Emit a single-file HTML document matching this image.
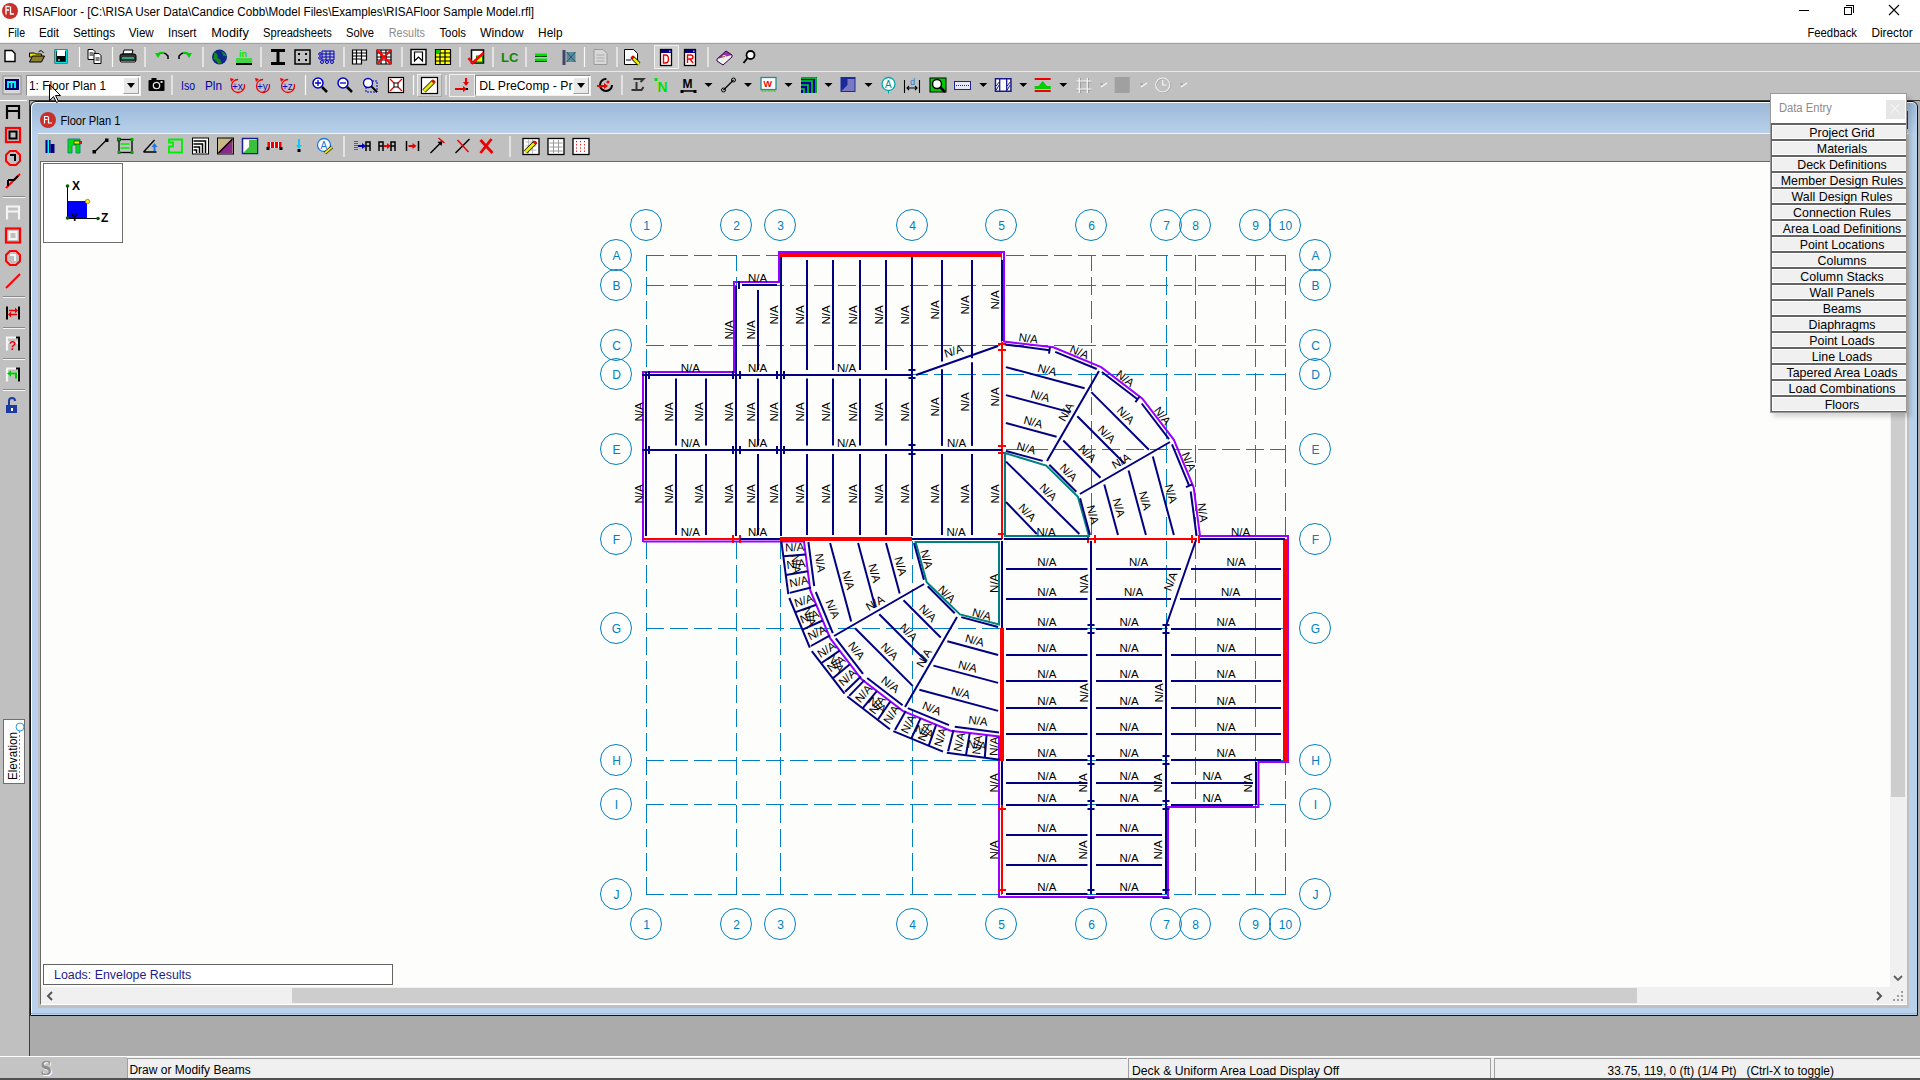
<!DOCTYPE html>
<html><head><meta charset="utf-8"><style>
*{margin:0;padding:0;box-sizing:border-box}
html,body{width:1920px;height:1080px;overflow:hidden;background:#c0c0c0;font-family:"Liberation Sans", sans-serif;}
.a{position:absolute}
svg text.na{font-family:"Liberation Sans", sans-serif;font-size:11.5px;fill:#000;text-anchor:middle;dominant-baseline:central}
svg text.bub{font-family:"Liberation Sans", sans-serif;font-size:12px;fill:#0080c0;text-anchor:middle}
</style></head>
<body>
<div class="a" style="left:0;top:0;width:1920px;height:42px;background:#fff"></div>
<div class="a" style="left:2px;top:3px;width:16px;height:16px;border-radius:50%;background:#c8302c"></div>
<div class="a" style="left:1799px;top:10px;width:10px;height:1px;background:#000"></div>
<div class="a" style="left:1846px;top:5px;width:8px;height:8px;border-top:1px solid #000;border-right:1px solid #000"></div>
<div class="a" style="left:1844px;top:7px;width:8px;height:8px;border:1px solid #000;background:#fff"></div>
<div class="a" style="left:0;top:42px;width:1920px;height:1px;background:#f0f0f0"></div>
<div class="a" style="left:0;top:43px;width:1920px;height:1px;background:#a0a0a0"></div>
<div class="a" style="left:0;top:44px;width:1920px;height:28px;background:#c0c0c0;border-bottom:1px solid #e8e8e8"></div>
<div class="a" style="left:0;top:72px;width:1920px;height:29px;background:#c0c0c0"></div>
<div class="a" style="left:0;top:100px;width:27px;height:1px;background:#fff"></div>
<div class="a" style="left:26px;top:75px;width:115px;height:21px;background:#fff;border:1px solid #8a8a8a;border-right-color:#f0f0f0;border-bottom-color:#f0f0f0"></div>
<div class="a" style="left:123px;top:77px;width:16px;height:17px;background:#e8e8e8;border:1px solid #fff;border-right-color:#a0a0a0;border-bottom-color:#a0a0a0"></div>
<div class="a" style="left:475px;top:75px;width:116px;height:21px;background:#fff;border:1px solid #8a8a8a;border-right-color:#f0f0f0;border-bottom-color:#f0f0f0"></div>
<div class="a" style="left:573px;top:77px;width:16px;height:17px;background:#e8e8e8;border:1px solid #fff;border-right-color:#a0a0a0;border-bottom-color:#a0a0a0"></div>
<div class="a" style="left:417px;top:74px;width:25px;height:23px;background:#d0d0d0;border:1px solid #f0f0f0;border-right-color:#a8a8a8;border-bottom-color:#a8a8a8"></div>
<div class="a" style="left:449px;top:74px;width:26px;height:23px;background:#c8c8c8;border:1px solid #f0f0f0"></div>
<div class="a" style="left:654px;top:45px;width:25px;height:24px;background:#d0d0d0;border:1px solid #f0f0f0"></div>
<div class="a" style="left:29px;top:100px;width:1891px;height:957px;background:#ababab;border-left:1px solid #3c3c3c;border-top:1px solid #3c3c3c"></div>
<div class="a" style="left:30px;top:101px;width:1888px;height:915px;background:#b9d1ea;border:1px solid #111;border-radius:6px 6px 0 0;box-shadow:inset 1px 1px 0 #fff"></div>
<div class="a" style="left:32px;top:103px;width:1884px;height:30px;background:linear-gradient(#9cb9d8,#b8d0ea);border-radius:5px 5px 0 0"></div>
<div class="a" style="left:1906px;top:111px;width:2px;height:18px;background:#8a1a1a"></div>
<div class="a" style="left:31px;top:1013px;width:1886px;height:1px;background:#5ad8f0"></div>
<div class="a" style="left:40px;top:112px;width:16px;height:16px;border-radius:50%;background:#c8302c"></div>
<div class="a" style="left:38px;top:133px;width:1871px;height:875px;background:#c0c0c0;border-top:1px solid #f4f4f4"></div>
<div class="a" style="left:40px;top:161px;width:1867px;height:844px;background:#f0f0f0;border-left:1px solid #696969;border-top:1px solid #696969;border-bottom:1px solid #fff"></div>
<div class="a" style="left:41px;top:162px;width:1849px;height:825px;background:#fdfdfb"></div>
<div class="a" style="left:43px;top:163px;width:80px;height:80px;background:#fff;border:1px solid #6e6e6e"></div>
<div class="a" style="left:1890px;top:162px;width:17px;height:825px;background:#f0f0f0"></div>
<div class="a" style="left:1891px;top:162px;width:14px;height:635px;background:#cdcdcd"></div>
<div class="a" style="left:41px;top:987px;width:1849px;height:17px;background:#f0f0f0"></div>
<div class="a" style="left:292px;top:988px;width:1345px;height:15px;background:#cdcdcd"></div>
<div class="a" style="left:43px;top:964px;width:350px;height:21px;background:#fff;border:1px solid #646464"></div>
<div class="a" style="left:3px;top:719px;width:22px;height:65px;background:#fff;border:1px solid #6e6e6e"></div>
<div class="a" style="left:1773px;top:97px;width:138px;height:320px;background:rgba(0,0,0,.15);filter:blur(2px)"></div>
<div class="a" style="left:1770px;top:93px;width:137px;height:320px;background:#646464;border:1px solid #9a9a9a"></div>
<div class="a" style="left:1771px;top:94px;width:135px;height:29px;background:#fff"></div>
<div class="a" style="left:1886px;top:100px;width:19px;height:19px;background:#e6e6e6"></div>
<div class="a" style="left:1889px;top:108px;width:12px;height:1px;background:#f8f8f8;transform:rotate(45deg)"></div>
<div class="a" style="left:1889px;top:108px;width:12px;height:1px;background:#f8f8f8;transform:rotate(-45deg)"></div>
<div class="a" style="left:1772px;top:125px;width:134px;height:14px;background:#f0f0f0;border-top:1px solid #fff;border-bottom:1px solid #fff;border-left:1px solid #fff"></div>
<div class="a" style="left:1772px;top:141px;width:134px;height:14px;background:#f0f0f0;border-top:1px solid #fff;border-bottom:1px solid #fff;border-left:1px solid #fff"></div>
<div class="a" style="left:1772px;top:157px;width:134px;height:14px;background:#f0f0f0;border-top:1px solid #fff;border-bottom:1px solid #fff;border-left:1px solid #fff"></div>
<div class="a" style="left:1772px;top:173px;width:134px;height:14px;background:#f0f0f0;border-top:1px solid #fff;border-bottom:1px solid #fff;border-left:1px solid #fff"></div>
<div class="a" style="left:1772px;top:189px;width:134px;height:14px;background:#f0f0f0;border-top:1px solid #fff;border-bottom:1px solid #fff;border-left:1px solid #fff"></div>
<div class="a" style="left:1772px;top:205px;width:134px;height:14px;background:#f0f0f0;border-top:1px solid #fff;border-bottom:1px solid #fff;border-left:1px solid #fff"></div>
<div class="a" style="left:1772px;top:221px;width:134px;height:14px;background:#f0f0f0;border-top:1px solid #fff;border-bottom:1px solid #fff;border-left:1px solid #fff"></div>
<div class="a" style="left:1772px;top:237px;width:134px;height:14px;background:#f0f0f0;border-top:1px solid #fff;border-bottom:1px solid #fff;border-left:1px solid #fff"></div>
<div class="a" style="left:1772px;top:253px;width:134px;height:14px;background:#f0f0f0;border-top:1px solid #fff;border-bottom:1px solid #fff;border-left:1px solid #fff"></div>
<div class="a" style="left:1772px;top:269px;width:134px;height:14px;background:#f0f0f0;border-top:1px solid #fff;border-bottom:1px solid #fff;border-left:1px solid #fff"></div>
<div class="a" style="left:1772px;top:285px;width:134px;height:14px;background:#f0f0f0;border-top:1px solid #fff;border-bottom:1px solid #fff;border-left:1px solid #fff"></div>
<div class="a" style="left:1772px;top:301px;width:134px;height:14px;background:#f0f0f0;border-top:1px solid #fff;border-bottom:1px solid #fff;border-left:1px solid #fff"></div>
<div class="a" style="left:1772px;top:317px;width:134px;height:14px;background:#f0f0f0;border-top:1px solid #fff;border-bottom:1px solid #fff;border-left:1px solid #fff"></div>
<div class="a" style="left:1772px;top:333px;width:134px;height:14px;background:#f0f0f0;border-top:1px solid #fff;border-bottom:1px solid #fff;border-left:1px solid #fff"></div>
<div class="a" style="left:1772px;top:349px;width:134px;height:14px;background:#f0f0f0;border-top:1px solid #fff;border-bottom:1px solid #fff;border-left:1px solid #fff"></div>
<div class="a" style="left:1772px;top:365px;width:134px;height:14px;background:#f0f0f0;border-top:1px solid #fff;border-bottom:1px solid #fff;border-left:1px solid #fff"></div>
<div class="a" style="left:1772px;top:381px;width:134px;height:14px;background:#f0f0f0;border-top:1px solid #fff;border-bottom:1px solid #fff;border-left:1px solid #fff"></div>
<div class="a" style="left:1772px;top:397px;width:134px;height:14px;background:#f0f0f0;border-top:1px solid #fff;border-bottom:1px solid #fff;border-left:1px solid #fff"></div>
<div class="a" style="left:0;top:1056px;width:1920px;height:24px;background:#f0f0f0;border-top:1px solid #fff"></div>
<div class="a" style="left:0;top:1057px;width:127px;height:21px;background:#c4c4c4"></div>
<div class="a" style="left:127px;top:1058px;width:1000px;height:20px;border-left:1px solid #a0a0a0;border-top:1px solid #a0a0a0"></div>
<div class="a" style="left:1128px;top:1058px;width:363px;height:20px;border-left:1px solid #a0a0a0;border-top:1px solid #a0a0a0;border-right:1px solid #a0a0a0"></div>
<div class="a" style="left:1494px;top:1058px;width:426px;height:20px;border-left:1px solid #a0a0a0;border-top:1px solid #a0a0a0"></div>
<div class="a" style="left:0;top:1078px;width:1920px;height:2px;background:#505050"></div>
<svg class="a" style="left:0;top:0" width="1920" height="1080" viewBox="0 0 1920 1080">
<g transform="translate(4.5,49)"><path d="M0.5,1.5 h7 l3,3 v8 h-10z" fill="#fff" stroke="#000" stroke-width="1.4"/></g>
<g transform="translate(29.5,49)"><path d="M0,4 h5 l1,1 h6 v3 h-12z" fill="#e8e000" stroke="#000" stroke-width="1"/><path d="M0,13 l3,-6 h12 l-3,6z" fill="#8a8030" stroke="#000" stroke-width="1"/><path d="M9,3 q3,-3 5,1" fill="none" stroke="#000" stroke-width="1"/></g>
<g transform="translate(54,49)"><rect x="0.5" y="0.5" width="13" height="14" fill="#000"/><rect x="1.5" y="1.5" width="11" height="12" fill="none" stroke="#00e0e0" stroke-width="1.5"/><rect x="3" y="1" width="8" height="6" fill="#fff"/><rect x="4" y="10" width="2" height="2" fill="#888"/></g>
<g transform="translate(87.5,49)"><path d="M0.5,0.5 h5 l2,2 v8 h-7z" fill="#fff" stroke="#000"/><path d="M6.5,4.5 h5 l2,2 v8 h-7z" fill="#fff" stroke="#000"/><path d="M2,4h4M2,6h4M8,9h4M8,11h4" stroke="#000"/></g>
<g transform="translate(120,49)"><path d="M4,1 h9 l-1,4 h-9z" fill="#fff" stroke="#000"/><rect x="0" y="5" width="16" height="8" rx="2" fill="#333" stroke="#000"/><rect x="2" y="8" width="12" height="2" fill="#2a8"/><rect x="1" y="12" width="14" height="2" fill="#666"/></g>
<g transform="translate(155,49)"><path d="M3,6 q5,-5 10,1 l0,3" fill="none" stroke="#000" stroke-width="1.5"/><polygon points="0,4 6,4 3,9" fill="#00d000"/><path d="M3,5 q3,-2 6,-1" stroke="#00d000" stroke-width="2" fill="none"/></g>
<g transform="translate(176,49)"><path d="M13,6 q-5,-5 -10,1 l0,3" fill="none" stroke="#000" stroke-width="1.5"/><polygon points="16,4 10,4 13,9" fill="#00d000"/><path d="M13,5 q-3,-2 -6,-1" stroke="#00d000" stroke-width="2" fill="none"/></g>
<g transform="translate(211.5,49)"><circle cx="8" cy="8" r="7.5" fill="#0a2a8a"/><path d="M3,3 q4,2 3,6 q3,1 4,5 l-3,1 q-2,-4 -5,-5z M10,2 q3,1 5,5 l-3,0z" fill="#1a8a1a"/></g>
<g transform="translate(236,49)"><text x="3" y="8" font-family="Liberation Sans" font-weight="bold" font-size="9" fill="#00e000">in</text><path d="M1,9 v6 h14 v-6 M3,9v6M5,9v6M7,9v6M9,9v6M11,9v6M13,9v6" stroke="#00e000" stroke-width="1.3" fill="none"/><rect x="0" y="14" width="16" height="2" fill="#000"/></g>
<g transform="translate(270,49)"><path d="M1,1.5 h14 M8,1.5 v13 M1,14.5 h14" stroke="#000" stroke-width="3"/></g>
<g transform="translate(294,49)"><rect x="1" y="1" width="15" height="14" fill="none" stroke="#000" stroke-width="1.5"/><rect x="4" y="4" width="2" height="2" fill="#000"/><rect x="11" y="4" width="2" height="2" fill="#000"/><rect x="4" y="10" width="2" height="2" fill="#000"/><rect x="11" y="10" width="2" height="2" fill="#000"/></g>
<g transform="translate(319,49)"><path d="M3,2 h12 v9 h-12z M3,5h12 M3,8h12 M7,2v9 M11,2v9" fill="none" stroke="#0000c0"/><circle cx="3" cy="13" r="1.5" fill="none" stroke="#0000c0"/><circle cx="8" cy="13" r="1.5" fill="none" stroke="#0000c0"/><circle cx="13" cy="13" r="1.5" fill="none" stroke="#0000c0"/><circle cx="1" cy="5" r="1.3" fill="none" stroke="#0000c0"/><circle cx="1" cy="9" r="1.3" fill="none" stroke="#0000c0"/></g>
<g transform="translate(351.5,49)"><path d="M1,1 h14 v10 h-5 v4 h-9z M1,4h14 M1,7h14 M1,10h9 M5,1v14 M10,1v10" fill="#fff" stroke="#000" stroke-width="1.2"/></g>
<g transform="translate(376,49)"><path d="M1,1 h14 v14 h-14z M1,4h14 M1,8h14 M1,11h14 M5,1v14 M10,1v14" fill="#fff" stroke="#000" stroke-width="1.2"/><path d="M1,1 L15,15 M15,1 L1,15" stroke="#f00" stroke-width="2"/></g>
<g transform="translate(410.5,49)"><rect x="0.5" y="0.5" width="15" height="15" fill="#fff" stroke="#000" stroke-width="1.4"/><path d="M4,3 v9 l4,-4 l4,4 v-9z" fill="none" stroke="#000" stroke-width="1.2"/></g>
<g transform="translate(435,49)"><rect x="0" y="0" width="16" height="16" fill="#ff0"/><path d="M0.5,0.5 h15 v15 h-15z M0,4h16 M0,8h16 M0,12h16 M5,0v16 M10,0v16" fill="none" stroke="#000" stroke-width="1.2"/><rect x="1" y="1" width="4" height="3" fill="#0c0"/></g>
<g transform="translate(468.5,49)"><rect x="3" y="1" width="12" height="13" fill="#fff" stroke="#000" stroke-width="1.5"/><rect x="8" y="7" width="6" height="6" fill="#ff0" stroke="#080"/><path d="M0,9 l4,5 l11,-10" fill="none" stroke="#f00" stroke-width="2.5"/></g>
<g transform="translate(501,49)"><text x="0" y="13" font-family="Liberation Sans" font-weight="bold" font-size="13" fill="#0a8a0a">LC</text></g>
<g transform="translate(533,49)"><path d="M2,6 h12 M2,11 h12" stroke="#00e000" stroke-width="3"/><path d="M2,7.5 h12 M2,12.5 h12" stroke="#004000" stroke-width="1"/></g>
<g transform="translate(560.5,49)"><rect x="2" y="1" width="3" height="15" fill="#446"/><rect x="6" y="3" width="9" height="10" fill="#5a8a9a"/><path d="M6,3 l9,10 M6,13 l9,-10" stroke="#2a5a6a"/></g>
<g transform="translate(592.5,49)"><path d="M1.5,0.5 h9 l4,4 v11 h-13z" fill="#d8d8d8" stroke="#9a9a9a"/><path d="M4,6h8M4,9h8M4,12h8" stroke="#a8a8a8"/></g>
<g transform="translate(624,49)"><path d="M0.5,0.5 h9 l4,4 v11 h-13z" fill="#fff" stroke="#000"/><path d="M8,8 l7,7" stroke="#000" stroke-width="4"/><path d="M8,8 l7,7" stroke="#ee0" stroke-width="2.5"/><path d="M7.5,7.5 l2,2" stroke="#e00" stroke-width="3"/><path d="M2,11 h5" stroke="#000"/></g>
<g transform="translate(659,49)"><rect x="1.5" y="0.5" width="11" height="16" fill="#fff" stroke="#000" stroke-width="1.3"/><rect x="2" y="1" width="10" height="3" fill="#000080"/><rect x="10" y="1.5" width="1.5" height="1.5" fill="#aaa"/><path d="M4.5,6 v8 h2 q3,0 3,-4 q0,-4 -3,-4z" fill="none" stroke="#e00" stroke-width="1.4"/></g>
<g transform="translate(683,49)"><rect x="1.5" y="0.5" width="11" height="16" fill="#fff" stroke="#000" stroke-width="1.3"/><rect x="2" y="1" width="10" height="3" fill="#000080"/><rect x="10" y="1.5" width="1.5" height="1.5" fill="#aaa"/><path d="M4.5,14 v-8 h3 q2.5,0 2.5,2 q0,2 -2.5,2 h-3 M7,10 l3,4" fill="none" stroke="#e00" stroke-width="1.4"/></g>
<g transform="translate(716,49)"><path d="M1,10 l9,-8 l6,4 l-9,8z" fill="#9a30b0" stroke="#300040"/><path d="M1,10 v2 l6,4 l9,-8 v-2" fill="#f0f0f0" stroke="#300040"/><text x="6" y="11" font-family="Liberation Sans" font-weight="bold" font-size="7" fill="#ff0">?</text></g>
<g transform="translate(741.5,49)"><circle cx="9" cy="6" r="4" fill="#fff" stroke="#000" stroke-width="1.8"/><path d="M6,9 l-4,5" stroke="#000" stroke-width="2"/></g>
<line x1="79.5" y1="47" x2="79.5" y2="67" stroke="#f8f8f8" stroke-width="1.2"/>
<line x1="112.5" y1="47" x2="112.5" y2="67" stroke="#f8f8f8" stroke-width="1.2"/>
<line x1="145" y1="47" x2="145" y2="67" stroke="#f8f8f8" stroke-width="1.2"/>
<line x1="203" y1="47" x2="203" y2="67" stroke="#f8f8f8" stroke-width="1.2"/>
<line x1="261" y1="47" x2="261" y2="67" stroke="#f8f8f8" stroke-width="1.2"/>
<line x1="344" y1="47" x2="344" y2="67" stroke="#f8f8f8" stroke-width="1.2"/>
<line x1="402" y1="47" x2="402" y2="67" stroke="#f8f8f8" stroke-width="1.2"/>
<line x1="460" y1="47" x2="460" y2="67" stroke="#f8f8f8" stroke-width="1.2"/>
<line x1="493" y1="47" x2="493" y2="67" stroke="#f8f8f8" stroke-width="1.2"/>
<line x1="526" y1="47" x2="526" y2="67" stroke="#f8f8f8" stroke-width="1.2"/>
<line x1="584.5" y1="47" x2="584.5" y2="67" stroke="#f8f8f8" stroke-width="1.2"/>
<line x1="617" y1="47" x2="617" y2="67" stroke="#f8f8f8" stroke-width="1.2"/>
<line x1="708" y1="47" x2="708" y2="67" stroke="#f8f8f8" stroke-width="1.2"/>
<g transform="translate(4,77)"><rect x="-1" y="-1" width="18" height="18" fill="#d8d8d8" stroke="#909090"/><rect x="1" y="2" width="14" height="11" fill="#00006a"/><path d="M4,11 v-6 h7 v6 M7.5,5v6" stroke="#0ff" stroke-width="1.8" fill="none"/></g>
<g transform="translate(148.5,77)"><rect x="0" y="3" width="16" height="11" rx="1" fill="#000"/><rect x="3" y="1" width="5" height="3" fill="#000"/><circle cx="8" cy="8.5" r="3.2" fill="none" stroke="#ddd" stroke-width="1.3"/><rect x="12" y="4" width="2" height="2" fill="#ddd"/></g>
<g transform="translate(180,77)"><text x="1" y="13" font-family="Liberation Sans" font-size="13" fill="#0000b0" textLength="14" lengthAdjust="spacingAndGlyphs">Iso</text></g>
<g transform="translate(205,77)"><text x="0" y="13" font-family="Liberation Sans" font-size="13" fill="#0000b0" textLength="17" lengthAdjust="spacingAndGlyphs">Pln</text></g>
<g transform="translate(229,77)"><circle cx="9" cy="9" r="6.5" fill="none" stroke="#e00" stroke-width="1.3" stroke-dasharray="30 8"/><path d="M1,1 l4,1 l-3,3z" fill="#e00"/><text x="3" y="13" font-family="Liberation Sans" font-size="10" fill="#1010c0">+x</text></g>
<g transform="translate(254,77)"><circle cx="9" cy="9" r="6.5" fill="none" stroke="#e00" stroke-width="1.3" stroke-dasharray="30 8"/><path d="M1,1 l4,1 l-3,3z" fill="#e00"/><text x="3" y="13" font-family="Liberation Sans" font-size="10" fill="#1010c0">+y</text></g>
<g transform="translate(279,77)"><circle cx="9" cy="9" r="6.5" fill="none" stroke="#e00" stroke-width="1.3" stroke-dasharray="30 8"/><path d="M1,1 l4,1 l-3,3z" fill="#e00"/><text x="3" y="13" font-family="Liberation Sans" font-size="10" fill="#1010c0">+z</text></g>
<g transform="translate(312,77)"><circle cx="6" cy="6" r="5" fill="#fff" stroke="#0000c0" stroke-width="1.5"/><path d="M3,6h6M6,3v6" stroke="#0000c0" stroke-width="1.3"/><path d="M10,10 l5,5" stroke="#000" stroke-width="2.5"/></g>
<g transform="translate(337,77)"><circle cx="6" cy="6" r="5" fill="#fff" stroke="#0000c0" stroke-width="1.5"/><path d="M3,6h6" stroke="#0000c0" stroke-width="1.3"/><path d="M10,10 l5,5" stroke="#000" stroke-width="2.5"/></g>
<g transform="translate(362,77)"><rect x="4" y="4" width="11" height="11" fill="none" stroke="#0000c0" stroke-dasharray="2 1"/><circle cx="6" cy="6" r="4.5" fill="#fff" stroke="#0000c0" stroke-width="1.3"/><path d="M9,9 l6,6" stroke="#000" stroke-width="2"/></g>
<g transform="translate(388,77)"><rect x="0.5" y="0.5" width="15" height="15" fill="#fff" stroke="#000" stroke-width="1.2"/><path d="M2,2l4,4M14,2l-4,4M2,14l4,-4M14,14l-4,-4" stroke="#e00" stroke-width="1.3"/><rect x="6" y="6" width="4" height="4" fill="none" stroke="#000"/></g>
<g transform="translate(421,77)"><rect x="0.5" y="0.5" width="16" height="16" fill="#fff" stroke="#000" stroke-width="1.2"/><path d="M3,14 l10,-10" stroke="#000" stroke-width="4.5"/><path d="M3,14 l10,-10" stroke="#ee0" stroke-width="3"/><path d="M11.5,5.5 l2,-2" stroke="#e00" stroke-width="3"/></g>
<g transform="translate(454,77)"><path d="M1,12 h8" stroke="#e00" stroke-width="2"/><polygon points="9,9 13,12 9,15" fill="#e00"/><path d="M12,1 v5" stroke="#e00" stroke-width="2"/><polygon points="9,5 15,5 12,9" fill="#e00"/><rect x="12" y="11" width="2" height="2" fill="#000"/></g>
<g transform="translate(597,77)"><circle cx="9" cy="8" r="6" fill="none" stroke="#000" stroke-width="2" stroke-dasharray="28 10"/><path d="M0,9 h8" stroke="#e00" stroke-width="2"/><polygon points="7,6 11,9 7,12" fill="#e00"/><circle cx="11" cy="5" r="1.5" fill="#e00"/></g>
<g transform="translate(629.5,77)"><path d="M4,2 h10 l-3,3 M7,5 v8 M2,13 h10 l2,-3" stroke="#333" stroke-width="2" fill="none"/></g>
<g transform="translate(654.5,77)"><rect x="0" y="1" width="3" height="3" fill="#00e000"/><text x="3" y="15" font-family="Liberation Sans" font-weight="bold" font-size="14" fill="#00e000">N</text></g>
<g transform="translate(680.5,77)"><text x="2" y="11" font-family="Liberation Sans" font-weight="bold" font-size="12" fill="#000">M</text><path d="M1,14h14" stroke="#000" stroke-width="1.5"/><rect x="0" y="13" width="3" height="3" fill="#000"/><rect x="13" y="13" width="3" height="3" fill="#000"/></g>
<g transform="translate(720.5,77)"><path d="M3,13 l10,-10" stroke="#000" stroke-width="1.2"/><circle cx="3" cy="13" r="2" fill="none" stroke="#000"/><circle cx="13" cy="3" r="2" fill="none" stroke="#000"/></g>
<g transform="translate(760.5,77)"><rect x="0.5" y="0.5" width="15" height="12" fill="#fff" stroke="#2a8a8a" stroke-width="1.3"/><text x="3" y="10" font-family="Liberation Sans" font-weight="bold" font-size="9" fill="#e00">W</text><path d="M1,14 h14" stroke="#0c0" stroke-dasharray="2 1"/></g>
<g transform="translate(801,77)"><rect x="0.5" y="0.5" width="15" height="15" fill="#0000a0" stroke="#0000a0"/><path d="M0,4 h11 v12 M0,8 h7 v8 M0,12 h3 v4" stroke="#00e000" stroke-width="1.5" fill="none"/><path d="M0,1 h15 v15" stroke="#00e000" stroke-width="1.5" fill="none"/></g>
<g transform="translate(840.5,77)"><rect x="0" y="0" width="15" height="15" fill="#1a2a9a"/><path d="M1,14 l6,-6 v-6 h7 v12z" fill="#7a7ac0"/></g>
<g transform="translate(880.5,77)"><circle cx="8" cy="7" r="6.5" fill="#fff" stroke="#0aa" stroke-width="1.3"/><text x="4.5" y="11" font-family="Liberation Sans" font-size="10" fill="#0a8a8a">A</text><path d="M8,13.5 v3" stroke="#0aa"/></g>
<g transform="translate(904,77)"><path d="M0.5,3 v13 M15.5,3 v13 M3,11 h10 M5,9 l-2,2 l2,2 M11,9 l2,2 l-2,2" stroke="#000" stroke-width="1.1" fill="none"/><text x="6" y="8" font-family="Liberation Sans" font-size="9" fill="#2a7ad0">d</text></g>
<polygon points="704.5,83 712.5,83 708.5,87" fill="#000"/>
<polygon points="744,83 752,83 748,87" fill="#000"/>
<polygon points="784.5,83 792.5,83 788.5,87" fill="#000"/>
<polygon points="824.5,83 832.5,83 828.5,87" fill="#000"/>
<polygon points="864.5,83 872.5,83 868.5,87" fill="#000"/>
<polygon points="979.3,83 987.3,83 983.3,87" fill="#000"/>
<polygon points="1019.3,83 1027.3,83 1023.3,87" fill="#000"/>
<polygon points="1059.3,83 1067.3,83 1063.3,87" fill="#000"/>
<path d="M1101,87 l6,-4" stroke="#f4f4f4" fill="none" stroke-width="1.5"/><path d="M1100,84 h3" stroke="#9a9a9a" stroke-width="1.2"/>
<path d="M1141,87 l6,-4" stroke="#f4f4f4" fill="none" stroke-width="1.5"/><path d="M1140,84 h3" stroke="#9a9a9a" stroke-width="1.2"/>
<path d="M1181,87 l6,-4" stroke="#f4f4f4" fill="none" stroke-width="1.5"/><path d="M1180,84 h3" stroke="#9a9a9a" stroke-width="1.2"/>
<g transform="translate(930,77)"><rect x="0" y="1" width="16" height="14" fill="#0c0" stroke="#000"/><circle cx="7" cy="7" r="4.5" fill="#fff" stroke="#000" stroke-width="1.5"/><path d="M10,10 l5,5" stroke="#000" stroke-width="2.5"/></g>
<g transform="translate(954,77)"><rect x="0.5" y="4.5" width="16" height="8" fill="#e8e8f8" stroke="#2020a0"/><path d="M2,8.5 h13" stroke="#2020a0" stroke-dasharray="1 1"/></g>
<g transform="translate(994.7,77)"><rect x="0.75" y="1.75" width="15.5" height="12.5" fill="#fff" stroke="#1a1a8a" stroke-width="1.5"/><path d="M5,2 v12 M12,2 v12" stroke="#1a1a8a" stroke-width="1.3"/><path d="M1.5,9 l3,-4 M1.5,13 l3,-5 M12.5,9 l3,-4 M12.5,13 l3,-5" stroke="#1a1a8a" stroke-width="1"/></g>
<g transform="translate(1034.7,77)"><path d="M0,2 h16" stroke="#e00" stroke-width="2"/><polygon points="3,10 8,4 13,10" fill="#0c0"/><rect x="0" y="9" width="16" height="3" fill="#0c0"/><path d="M0,14 h16" stroke="#e00" stroke-width="2"/></g>
<g transform="translate(1075.3,77)"><path d="M5,1 v15 M13,1 v15 M1,5 h15 M1,13 h15" stroke="#9a9a9a" stroke-width="1.2"/><path d="M4,1 v15 M12,1 v15 M1,4 h15 M1,12 h15" stroke="#f8f8f8" stroke-width="1.2"/></g>
<g transform="translate(1114.7,77)"><rect x="0" y="0" width="15" height="16" fill="#a0a0a0"/></g>
<g transform="translate(1154.7,77)"><circle cx="8.5" cy="8.5" r="7" fill="none" stroke="#9a9a9a" stroke-width="1.1"/><circle cx="8" cy="8" r="7" fill="none" stroke="#f4f4f4" stroke-width="1.1"/><path d="M8,3 v5 h4" stroke="#f4f4f4" stroke-width="1.2" fill="none"/></g>
<line x1="172" y1="75" x2="172" y2="95" stroke="#f8f8f8" stroke-width="1.2"/>
<line x1="305.5" y1="75" x2="305.5" y2="95" stroke="#f8f8f8" stroke-width="1.2"/>
<line x1="413.5" y1="75" x2="413.5" y2="95" stroke="#f8f8f8" stroke-width="1.2"/>
<line x1="446" y1="75" x2="446" y2="95" stroke="#f8f8f8" stroke-width="1.2"/>
<line x1="622" y1="75" x2="622" y2="95" stroke="#f8f8f8" stroke-width="1.2"/>
<g transform="translate(42.5,138)"><rect x="3" y="2" width="5" height="13" fill="#000080"/><rect x="5" y="1" width="1.5" height="14" fill="#0ff"/><rect x="8" y="6" width="4" height="9" fill="#000080"/></g>
<g transform="translate(67,138)"><path d="M1,1 h12 v14 h-4 v-8 h-4 v8 h-4z" fill="#00e000" stroke="#0a8a8a"/><rect x="7" y="3" width="6" height="3" fill="#ee0" stroke="#000" stroke-width=".6"/><rect x="12" y="3" width="3" height="3" fill="#f00"/></g>
<g transform="translate(92.5,138)"><path d="M2,14 L14,2" stroke="#000" stroke-width="1.2"/><rect x="0" y="12" width="3.5" height="3.5" fill="#000"/><rect x="12.5" y="0.5" width="3.5" height="3.5" fill="#000"/></g>
<g transform="translate(117.5,138)"><rect x="1.5" y="1.5" width="13" height="13" fill="none" stroke="#000" stroke-width="1.3"/><path d="M3,6 h9 M3,10 h9" stroke="#0e0" stroke-width="1.5"/><rect x="0" y="0" width="3" height="3" fill="#0a0" stroke="#000" stroke-width=".5"/><rect x="13" y="0" width="3" height="3" fill="#0a0"/><rect x="0" y="13" width="3" height="3" fill="#0a0"/><rect x="13" y="13" width="3" height="3" fill="#0a0"/></g>
<g transform="translate(142.5,138)"><path d="M1,14 L12,2 M1,14 h13" stroke="#000" stroke-width="1.3" stroke-dasharray="30 0"/><polygon points="9,9 12,5 15,9 13,9 13,13 11,13 11,9" fill="#1a7ae0"/></g>
<g transform="translate(167.5,138)"><path d="M1.5,1.5 h13 v13 h-13 v-6 h4 v-4 h-4z" fill="none" stroke="#0e0" stroke-width="1.8"/></g>
<g transform="translate(192.5,138)"><rect x="0" y="0" width="16" height="16" fill="#fff" stroke="#000"/><path d="M1,3 h12 v12 M1,6 h9 v9 M1,9 h6 v6 M1,12 h3 v3" stroke="#000" stroke-width="1.5" fill="none"/></g>
<g transform="translate(217.5,138)"><rect x="0" y="0" width="16" height="16" fill="#c8b888" stroke="#000"/><path d="M1,15 L15,1 V15z" fill="#8a2a8a"/><path d="M1,15 L15,1" stroke="#000" stroke-width="1.5"/></g>
<g transform="translate(242,138)"><rect x="0.5" y="0.5" width="15" height="15" fill="#fff" stroke="#1a1a9a" stroke-width="1.5"/><path d="M1,15 l6,-6 v-7 h8 v13z" fill="#3ac03a"/></g>
<g transform="translate(266.5,138)"><rect x="1" y="4" width="14" height="6" fill="#e00"/><path d="M4,4v6M8,4v6M12,4v6" stroke="#fff"/><rect x="0" y="9" width="3" height="3" fill="#000"/><rect x="13" y="9" width="3" height="3" fill="#000"/></g>
<g transform="translate(291,138)"><path d="M8,1 v9" stroke="#0cf" stroke-width="2"/><polygon points="5,7 11,7 8,11" fill="#0cf"/><rect x="6.5" y="11" width="3" height="3" fill="#000"/></g>
<g transform="translate(317,138)"><circle cx="7" cy="7" r="6.5" fill="#fff" stroke="#1a7ae0" stroke-width="1.3"/><text x="3.5" y="11" font-family="Liberation Sans" font-size="10" fill="#1a7ae0">A</text><path d="M8,15 l7,-6" stroke="#000" stroke-width="3"/><path d="M8,15 l7,-6" stroke="#ee0" stroke-width="2"/></g>
<g transform="translate(354,138)"><path d="M1,3v10M3,3v10" stroke="#000" stroke-dasharray="1 1"/><path d="M4,8h5" stroke="#0000c0" stroke-width="2"/><polygon points="8,5 12,8 8,11" fill="#0000c0"/><path d="M12,13 v-9 h4 v9 M12,8 h4" stroke="#000" stroke-width="1.5" fill="none"/></g>
<g transform="translate(379,138)"><path d="M0,13 v-9 h4 v9 M0,8 h4" stroke="#000" stroke-width="1.5" fill="none"/><path d="M5,8h4" stroke="#e00" stroke-width="2"/><polygon points="8,5 12,8 8,11" fill="#e00"/><path d="M12,13 v-9 h4 v9 M12,8 h4" stroke="#000" stroke-width="1.5" fill="none"/></g>
<g transform="translate(404.5,138)"><path d="M2,3v10 M14,3v10" stroke="#000" stroke-width="1.5"/><path d="M4,8h5" stroke="#e00" stroke-width="2"/><polygon points="8,5 12,8 8,11" fill="#e00"/></g>
<g transform="translate(429.5,138)"><path d="M1,15 l10,-10" stroke="#000" stroke-width="1.5"/><polygon points="8,4 13,3 12,8" fill="#000"/><path d="M9,0 l6,5" stroke="#e00" stroke-width="1.5"/></g>
<g transform="translate(454.5,138)"><path d="M1,15 l14,-14" stroke="#000" stroke-width="1.5"/><path d="M3,2 l11,12" stroke="#e00" stroke-width="1.5"/></g>
<g transform="translate(478.5,138)"><path d="M2,2 l12,13 M13,1 l-11,14" stroke="#e00" stroke-width="2.8"/></g>
<g transform="translate(522.5,138)"><rect x="0.5" y="0.5" width="16" height="16" fill="#fff" stroke="#000" stroke-width="1.3"/><path d="M3,4h11M3,8h11M3,12h11M6,1v15M10,1v15" stroke="#bbb"/><path d="M3,14 l10,-10" stroke="#000" stroke-width="4.5"/><path d="M3,14 l10,-10" stroke="#ee0" stroke-width="3"/><path d="M11.5,5.5 l2,-2" stroke="#e00" stroke-width="3"/></g>
<g transform="translate(547.5,138)"><rect x="0.5" y="0.5" width="16" height="16" fill="#fff" stroke="#000" stroke-width="1.3"/><path d="M2,5h13M2,9h13M2,13h13M6,2v13M11,2v13" stroke="#9a9a9a"/></g>
<g transform="translate(572.5,138)"><rect x="0.5" y="0.5" width="16" height="16" fill="#fff" stroke="#000" stroke-width="1.3"/><path d="M4,3v11M8,3v11M12,3v11" stroke="#e00" stroke-dasharray="1.2 2"/></g>
<line x1="344" y1="136" x2="344" y2="157" stroke="#f8f8f8" stroke-width="1.2"/>
<line x1="510" y1="136" x2="510" y2="157" stroke="#f8f8f8" stroke-width="1.2"/>
<g transform="translate(5,104)"><path d="M2,15 v-13 h12 v13 M2,7 h12" stroke="#000" stroke-width="2.2" fill="none"/></g>
<g transform="translate(5,127)"><rect x="1" y="1" width="14" height="14" fill="none" stroke="#f00" stroke-width="2.2"/><rect x="4.5" y="4.5" width="7" height="7" fill="none" stroke="#000" stroke-width="2"/></g>
<g transform="translate(5,150)"><path d="M5,1 h6 l4,4 v6 l-4,4 h-6 l-4,-4 v-6z" fill="none" stroke="#f00" stroke-width="2"/><path d="M5,5 h5 v6" fill="none" stroke="#000" stroke-width="2"/></g>
<g transform="translate(5,173)"><path d="M1,15 L15,1" stroke="#f00" stroke-width="2"/><path d="M3,7 v6 M3,7 h6 L13,3" stroke="#000" stroke-width="2" fill="none"/></g>
<g transform="translate(5,204.5)"><path d="M2,15 v-13 h12 v13 M2,7 h12" stroke="#f4f4f4" stroke-width="2.2" fill="none"/></g>
<g transform="translate(5,227.5)"><rect x="1" y="1" width="14" height="14" fill="none" stroke="#f00" stroke-width="2.2"/><rect x="4.5" y="4.5" width="7" height="7" fill="none" stroke="#f4f4f4" stroke-width="2"/></g>
<g transform="translate(5,250)"><path d="M5,1 h6 l4,4 v6 l-4,4 h-6 l-4,-4 v-6z" fill="none" stroke="#f00" stroke-width="2"/><path d="M5,5 h5 v6" fill="none" stroke="#f4f4f4" stroke-width="2"/></g>
<g transform="translate(5,273)"><path d="M1,15 L15,1" stroke="#f00" stroke-width="2"/></g>
<g transform="translate(5,304.5)"><path d="M2,2 v13 M14,2 v13" stroke="#000" stroke-width="2"/><path d="M4,6 h8 M12,10 h-8" stroke="#e00" stroke-width="1.5"/><polygon points="10,3 13,6 10,9" fill="#e00"/><polygon points="6,7 3,10 6,13" fill="#e00"/></g>
<g transform="translate(5,335.5)"><path d="M2,15 v-13 h12 v13 M2,7 h12" stroke="#f4f4f4" stroke-width="2.2" fill="none"/><path d="M11,2 h3 v13" stroke="#000" stroke-width="2" fill="none"/><text x="4" y="14" font-family="Liberation Sans" font-weight="bold" font-size="12" fill="#e00">?</text></g>
<g transform="translate(5,366.5)"><path d="M2,15 v-13 h12 v13 M2,7 h12" stroke="#f4f4f4" stroke-width="2.2" fill="none"/><path d="M11,2 h3 v13" stroke="#000" stroke-width="2" fill="none"/><path d="M4,7 h7 v5" stroke="#0c0" stroke-width="2" fill="none"/><polygon points="2,7 6,4 6,10" fill="#0c0"/></g>
<g transform="translate(5,397)"><rect x="1" y="8" width="11" height="8" fill="#1a3aa0"/><path d="M4,8 v-4 a3,3 0 0 1 6,0" stroke="#1a3aa0" stroke-width="2" fill="none"/><rect x="6" y="11" width="2" height="3" fill="#fff"/></g>
<line x1="3" y1="196.5" x2="25" y2="196.5" stroke="#8a8a8a"/><line x1="3" y1="197.5" x2="25" y2="197.5" stroke="#f4f4f4"/>
<line x1="3" y1="296.5" x2="25" y2="296.5" stroke="#8a8a8a"/><line x1="3" y1="297.5" x2="25" y2="297.5" stroke="#f4f4f4"/>
<line x1="3" y1="327.5" x2="25" y2="327.5" stroke="#8a8a8a"/><line x1="3" y1="328.5" x2="25" y2="328.5" stroke="#f4f4f4"/>
<line x1="3" y1="358.5" x2="25" y2="358.5" stroke="#8a8a8a"/><line x1="3" y1="359.5" x2="25" y2="359.5" stroke="#f4f4f4"/>
<line x1="3" y1="389.5" x2="25" y2="389.5" stroke="#8a8a8a"/><line x1="3" y1="390.5" x2="25" y2="390.5" stroke="#f4f4f4"/>
<path d="M1889,5 l10,10 M1899,5 l-10,10" stroke="#000" stroke-width="1.1"/>
<polygon points="127,83 135,83 131,88" fill="#000"/><polygon points="577,83 585,83 581,88" fill="#000"/>
<path d="M49.5,84.5 L49.5,100.5 L53.5,96.5 L56.5,102.5 L58.5,101.5 L55.5,95.5 L60.5,95.5 Z" fill="#fff" stroke="#000" stroke-width="1" stroke-linejoin="miter"/>
<circle cx="20" cy="727" r="4" fill="none" stroke="#2a9ae0" stroke-width="1"/><line x1="19.5" y1="731" x2="19.5" y2="780" stroke="#2a9ae0" stroke-dasharray="2 2"/>
<line x1="646.5" y1="255" x2="646.5" y2="895" stroke="#0080c0" stroke-width="1" stroke-dasharray="18 6" stroke-dashoffset="2"/>
<line x1="736.5" y1="255" x2="736.5" y2="895" stroke="#0080c0" stroke-width="1" stroke-dasharray="18 6" stroke-dashoffset="2"/>
<line x1="780.5" y1="255" x2="780.5" y2="895" stroke="#0080c0" stroke-width="1" stroke-dasharray="18 6" stroke-dashoffset="2"/>
<line x1="912.5" y1="255" x2="912.5" y2="895" stroke="#0080c0" stroke-width="1" stroke-dasharray="18 6" stroke-dashoffset="2"/>
<line x1="1001.5" y1="255" x2="1001.5" y2="895" stroke="#0080c0" stroke-width="1" stroke-dasharray="18 6" stroke-dashoffset="2"/>
<line x1="1091.5" y1="255" x2="1091.5" y2="895" stroke="#0080c0" stroke-width="1" stroke-dasharray="18 6" stroke-dashoffset="2"/>
<line x1="1166.5" y1="255" x2="1166.5" y2="895" stroke="#0080c0" stroke-width="1" stroke-dasharray="18 6" stroke-dashoffset="2"/>
<line x1="1195.5" y1="255" x2="1195.5" y2="895" stroke="#0080c0" stroke-width="1" stroke-dasharray="18 6" stroke-dashoffset="2"/>
<line x1="1255.5" y1="255" x2="1255.5" y2="895" stroke="#0080c0" stroke-width="1" stroke-dasharray="18 6" stroke-dashoffset="2"/>
<line x1="1285.5" y1="255" x2="1285.5" y2="895" stroke="#0080c0" stroke-width="1" stroke-dasharray="18 6" stroke-dashoffset="2"/>
<line x1="646" y1="255.5" x2="1286" y2="255.5" stroke="#0080c0" stroke-width="1" stroke-dasharray="18 6"/>
<line x1="646" y1="285.5" x2="1286" y2="285.5" stroke="#0080c0" stroke-width="1" stroke-dasharray="18 6"/>
<line x1="646" y1="345.5" x2="1286" y2="345.5" stroke="#0080c0" stroke-width="1" stroke-dasharray="18 6"/>
<line x1="646" y1="374.5" x2="1286" y2="374.5" stroke="#0080c0" stroke-width="1" stroke-dasharray="18 6"/>
<line x1="646" y1="449.5" x2="1286" y2="449.5" stroke="#0080c0" stroke-width="1" stroke-dasharray="18 6"/>
<line x1="646" y1="539.5" x2="1286" y2="539.5" stroke="#0080c0" stroke-width="1" stroke-dasharray="18 6"/>
<line x1="646" y1="628.5" x2="1286" y2="628.5" stroke="#0080c0" stroke-width="1" stroke-dasharray="18 6"/>
<line x1="646" y1="760.5" x2="1286" y2="760.5" stroke="#0080c0" stroke-width="1" stroke-dasharray="18 6"/>
<line x1="646" y1="804.5" x2="1286" y2="804.5" stroke="#0080c0" stroke-width="1" stroke-dasharray="18 6"/>
<line x1="646" y1="894.5" x2="1286" y2="894.5" stroke="#0080c0" stroke-width="1" stroke-dasharray="18 6"/>
<circle cx="646" cy="225" r="15.5" fill="none" stroke="#0080c0" stroke-width="1"/>
<text x="646.5" y="230" class="bub">1</text>
<circle cx="646" cy="924" r="15.5" fill="none" stroke="#0080c0" stroke-width="1"/>
<text x="646.5" y="929" class="bub">1</text>
<circle cx="736" cy="225" r="15.5" fill="none" stroke="#0080c0" stroke-width="1"/>
<text x="736.5" y="230" class="bub">2</text>
<circle cx="736" cy="924" r="15.5" fill="none" stroke="#0080c0" stroke-width="1"/>
<text x="736.5" y="929" class="bub">2</text>
<circle cx="780" cy="225" r="15.5" fill="none" stroke="#0080c0" stroke-width="1"/>
<text x="780.5" y="230" class="bub">3</text>
<circle cx="780" cy="924" r="15.5" fill="none" stroke="#0080c0" stroke-width="1"/>
<text x="780.5" y="929" class="bub">3</text>
<circle cx="912" cy="225" r="15.5" fill="none" stroke="#0080c0" stroke-width="1"/>
<text x="912.5" y="230" class="bub">4</text>
<circle cx="912" cy="924" r="15.5" fill="none" stroke="#0080c0" stroke-width="1"/>
<text x="912.5" y="929" class="bub">4</text>
<circle cx="1001" cy="225" r="15.5" fill="none" stroke="#0080c0" stroke-width="1"/>
<text x="1001.5" y="230" class="bub">5</text>
<circle cx="1001" cy="924" r="15.5" fill="none" stroke="#0080c0" stroke-width="1"/>
<text x="1001.5" y="929" class="bub">5</text>
<circle cx="1091" cy="225" r="15.5" fill="none" stroke="#0080c0" stroke-width="1"/>
<text x="1091.5" y="230" class="bub">6</text>
<circle cx="1091" cy="924" r="15.5" fill="none" stroke="#0080c0" stroke-width="1"/>
<text x="1091.5" y="929" class="bub">6</text>
<circle cx="1166" cy="225" r="15.5" fill="none" stroke="#0080c0" stroke-width="1"/>
<text x="1166.5" y="230" class="bub">7</text>
<circle cx="1166" cy="924" r="15.5" fill="none" stroke="#0080c0" stroke-width="1"/>
<text x="1166.5" y="929" class="bub">7</text>
<circle cx="1195" cy="225" r="15.5" fill="none" stroke="#0080c0" stroke-width="1"/>
<text x="1195.5" y="230" class="bub">8</text>
<circle cx="1195" cy="924" r="15.5" fill="none" stroke="#0080c0" stroke-width="1"/>
<text x="1195.5" y="929" class="bub">8</text>
<circle cx="1255" cy="225" r="15.5" fill="none" stroke="#0080c0" stroke-width="1"/>
<text x="1255.5" y="230" class="bub">9</text>
<circle cx="1255" cy="924" r="15.5" fill="none" stroke="#0080c0" stroke-width="1"/>
<text x="1255.5" y="929" class="bub">9</text>
<circle cx="1285" cy="225" r="15.5" fill="none" stroke="#0080c0" stroke-width="1"/>
<text x="1285.5" y="230" class="bub">10</text>
<circle cx="1285" cy="924" r="15.5" fill="none" stroke="#0080c0" stroke-width="1"/>
<text x="1285.5" y="929" class="bub">10</text>
<circle cx="616" cy="255" r="15.5" fill="none" stroke="#0080c0" stroke-width="1"/>
<text x="616.5" y="260" class="bub">A</text>
<circle cx="1315" cy="255" r="15.5" fill="none" stroke="#0080c0" stroke-width="1"/>
<text x="1315.5" y="260" class="bub">A</text>
<circle cx="616" cy="285" r="15.5" fill="none" stroke="#0080c0" stroke-width="1"/>
<text x="616.5" y="290" class="bub">B</text>
<circle cx="1315" cy="285" r="15.5" fill="none" stroke="#0080c0" stroke-width="1"/>
<text x="1315.5" y="290" class="bub">B</text>
<circle cx="616" cy="345" r="15.5" fill="none" stroke="#0080c0" stroke-width="1"/>
<text x="616.5" y="350" class="bub">C</text>
<circle cx="1315" cy="345" r="15.5" fill="none" stroke="#0080c0" stroke-width="1"/>
<text x="1315.5" y="350" class="bub">C</text>
<circle cx="616" cy="374" r="15.5" fill="none" stroke="#0080c0" stroke-width="1"/>
<text x="616.5" y="379" class="bub">D</text>
<circle cx="1315" cy="374" r="15.5" fill="none" stroke="#0080c0" stroke-width="1"/>
<text x="1315.5" y="379" class="bub">D</text>
<circle cx="616" cy="449" r="15.5" fill="none" stroke="#0080c0" stroke-width="1"/>
<text x="616.5" y="454" class="bub">E</text>
<circle cx="1315" cy="449" r="15.5" fill="none" stroke="#0080c0" stroke-width="1"/>
<text x="1315.5" y="454" class="bub">E</text>
<circle cx="616" cy="539" r="15.5" fill="none" stroke="#0080c0" stroke-width="1"/>
<text x="616.5" y="544" class="bub">F</text>
<circle cx="1315" cy="539" r="15.5" fill="none" stroke="#0080c0" stroke-width="1"/>
<text x="1315.5" y="544" class="bub">F</text>
<circle cx="616" cy="628" r="15.5" fill="none" stroke="#0080c0" stroke-width="1"/>
<text x="616.5" y="633" class="bub">G</text>
<circle cx="1315" cy="628" r="15.5" fill="none" stroke="#0080c0" stroke-width="1"/>
<text x="1315.5" y="633" class="bub">G</text>
<circle cx="616" cy="760" r="15.5" fill="none" stroke="#0080c0" stroke-width="1"/>
<text x="616.5" y="765" class="bub">H</text>
<circle cx="1315" cy="760" r="15.5" fill="none" stroke="#0080c0" stroke-width="1"/>
<text x="1315.5" y="765" class="bub">H</text>
<circle cx="616" cy="804" r="15.5" fill="none" stroke="#0080c0" stroke-width="1"/>
<text x="616.5" y="809" class="bub">I</text>
<circle cx="1315" cy="804" r="15.5" fill="none" stroke="#0080c0" stroke-width="1"/>
<text x="1315.5" y="809" class="bub">I</text>
<circle cx="616" cy="894" r="15.5" fill="none" stroke="#0080c0" stroke-width="1"/>
<text x="616.5" y="899" class="bub">J</text>
<circle cx="1315" cy="894" r="15.5" fill="none" stroke="#0080c0" stroke-width="1"/>
<text x="1315.5" y="899" class="bub">J</text>
<polyline points="643.0,542.0 643.0,372.0 734.0,372.0 734.0,282.0 779.0,282.0 779.0,252.0 1004.0,252.0 1004.0,341.5 1053.4,347.3 1101.2,367.1 1142.4,398.6 1173.9,439.8 1193.7,487.6 1200.0,536.0 1288.0,536.0 1288.0,762.0 1258.5,762.0 1258.5,807.0 1168.0,807.0 1168.0,897.0 999.0,897.0 999.0,736.5 950.6,730.7 902.7,710.9 861.6,679.4 830.1,638.2 810.3,590.4 804.0,541.5 643.0,541.5" fill="none" stroke="#9900ff" stroke-width="2" stroke-linejoin="miter"/>
<line x1="780.0" y1="255.0" x2="1002.0" y2="255.0" stroke="#ff0000" stroke-width="4"/>
<line x1="780.0" y1="539.0" x2="912.0" y2="539.0" stroke="#ff0000" stroke-width="4"/>
<line x1="1285.0" y1="539.0" x2="1285.0" y2="761.0" stroke="#ff0000" stroke-width="4"/>
<line x1="1002.0" y1="628.0" x2="1002.0" y2="761.0" stroke="#ff0000" stroke-width="4"/>
<line x1="643.0" y1="539.0" x2="740.0" y2="539.0" stroke="#ff0000" stroke-width="2"/>
<line x1="1002.0" y1="342.0" x2="1002.0" y2="539.0" stroke="#ff0000" stroke-width="2"/>
<line x1="1089.0" y1="539.0" x2="1197.0" y2="539.0" stroke="#ff0000" stroke-width="2"/>
<line x1="1002.0" y1="805.0" x2="1002.0" y2="894.0" stroke="#ff0000" stroke-width="2"/>
<line x1="998.0" y1="344.0" x2="1006.0" y2="344.0" stroke="#ff0000" stroke-width="2"/>
<line x1="998.0" y1="350.0" x2="1006.0" y2="350.0" stroke="#ff0000" stroke-width="2"/>
<line x1="998.0" y1="446.0" x2="1006.0" y2="446.0" stroke="#ff0000" stroke-width="2"/>
<line x1="998.0" y1="453.0" x2="1006.0" y2="453.0" stroke="#ff0000" stroke-width="2"/>
<line x1="998.0" y1="534.0" x2="1006.0" y2="534.0" stroke="#ff0000" stroke-width="2"/>
<line x1="1088.0" y1="535.0" x2="1088.0" y2="543.0" stroke="#ff0000" stroke-width="2"/>
<line x1="1095.0" y1="535.0" x2="1095.0" y2="543.0" stroke="#ff0000" stroke-width="2"/>
<line x1="1192.0" y1="535.0" x2="1192.0" y2="543.0" stroke="#ff0000" stroke-width="2"/>
<line x1="1199.0" y1="535.0" x2="1199.0" y2="543.0" stroke="#ff0000" stroke-width="2"/>
<line x1="733.0" y1="535.0" x2="733.0" y2="543.0" stroke="#ff0000" stroke-width="2"/>
<line x1="740.0" y1="535.0" x2="740.0" y2="543.0" stroke="#ff0000" stroke-width="2"/>
<line x1="998.0" y1="809.0" x2="1006.0" y2="809.0" stroke="#ff0000" stroke-width="2"/>
<line x1="998.0" y1="890.0" x2="1006.0" y2="890.0" stroke="#ff0000" stroke-width="2"/>
<line x1="642.0" y1="375.0" x2="912.0" y2="375.0" stroke="#000080" stroke-width="2"/>
<line x1="642.0" y1="450.0" x2="1002.0" y2="450.0" stroke="#000080" stroke-width="2"/>
<line x1="742.0" y1="285.0" x2="777.0" y2="285.0" stroke="#000080" stroke-width="2"/>
<line x1="740.0" y1="539.0" x2="780.0" y2="539.0" stroke="#000080" stroke-width="2"/>
<line x1="916.0" y1="375.0" x2="998.0" y2="346.0" stroke="#000080" stroke-width="2"/>
<line x1="646.0" y1="372.0" x2="646.0" y2="536.0" stroke="#000080" stroke-width="2"/>
<line x1="736.0" y1="286.0" x2="736.0" y2="536.0" stroke="#000080" stroke-width="2"/>
<line x1="781.0" y1="257.0" x2="781.0" y2="536.0" stroke="#000080" stroke-width="2"/>
<line x1="912.0" y1="257.0" x2="912.0" y2="536.0" stroke="#000080" stroke-width="2"/>
<line x1="676.0" y1="378.5" x2="676.0" y2="445.5" stroke="#000080" stroke-width="2"/>
<line x1="676.0" y1="454.0" x2="676.0" y2="535.0" stroke="#000080" stroke-width="2"/>
<line x1="706.0" y1="378.5" x2="706.0" y2="445.5" stroke="#000080" stroke-width="2"/>
<line x1="706.0" y1="454.0" x2="706.0" y2="535.0" stroke="#000080" stroke-width="2"/>
<line x1="758.0" y1="378.5" x2="758.0" y2="445.5" stroke="#000080" stroke-width="2"/>
<line x1="758.0" y1="454.0" x2="758.0" y2="535.0" stroke="#000080" stroke-width="2"/>
<line x1="807.0" y1="378.5" x2="807.0" y2="445.5" stroke="#000080" stroke-width="2"/>
<line x1="807.0" y1="454.0" x2="807.0" y2="535.0" stroke="#000080" stroke-width="2"/>
<line x1="833.0" y1="378.5" x2="833.0" y2="445.5" stroke="#000080" stroke-width="2"/>
<line x1="833.0" y1="454.0" x2="833.0" y2="535.0" stroke="#000080" stroke-width="2"/>
<line x1="860.0" y1="378.5" x2="860.0" y2="445.5" stroke="#000080" stroke-width="2"/>
<line x1="860.0" y1="454.0" x2="860.0" y2="535.0" stroke="#000080" stroke-width="2"/>
<line x1="886.0" y1="378.5" x2="886.0" y2="445.5" stroke="#000080" stroke-width="2"/>
<line x1="886.0" y1="454.0" x2="886.0" y2="535.0" stroke="#000080" stroke-width="2"/>
<line x1="942.0" y1="378.5" x2="942.0" y2="445.5" stroke="#000080" stroke-width="2"/>
<line x1="942.0" y1="454.0" x2="942.0" y2="535.0" stroke="#000080" stroke-width="2"/>
<line x1="972.0" y1="378.5" x2="972.0" y2="445.5" stroke="#000080" stroke-width="2"/>
<line x1="972.0" y1="454.0" x2="972.0" y2="535.0" stroke="#000080" stroke-width="2"/>
<line x1="807.0" y1="260.0" x2="807.0" y2="370.0" stroke="#000080" stroke-width="2"/>
<line x1="833.0" y1="260.0" x2="833.0" y2="370.0" stroke="#000080" stroke-width="2"/>
<line x1="860.0" y1="260.0" x2="860.0" y2="370.0" stroke="#000080" stroke-width="2"/>
<line x1="886.0" y1="260.0" x2="886.0" y2="370.0" stroke="#000080" stroke-width="2"/>
<line x1="758.0" y1="290.0" x2="758.0" y2="370.0" stroke="#000080" stroke-width="2"/>
<line x1="942.0" y1="260.0" x2="942.0" y2="361.5" stroke="#000080" stroke-width="2"/>
<line x1="942.0" y1="369.3" x2="942.0" y2="445.7" stroke="#000080" stroke-width="2"/>
<line x1="972.0" y1="260.0" x2="972.0" y2="358.2" stroke="#000080" stroke-width="2"/>
<line x1="972.0" y1="362.2" x2="972.0" y2="445.7" stroke="#000080" stroke-width="2"/>
<line x1="1002.0" y1="260.0" x2="1002.0" y2="341.0" stroke="#000080" stroke-width="2"/>
<line x1="649.0" y1="371.0" x2="649.0" y2="379.0" stroke="#000080" stroke-width="2"/>
<line x1="649.0" y1="446.0" x2="649.0" y2="454.0" stroke="#000080" stroke-width="2"/>
<line x1="733.0" y1="371.0" x2="733.0" y2="379.0" stroke="#000080" stroke-width="2"/>
<line x1="733.0" y1="446.0" x2="733.0" y2="454.0" stroke="#000080" stroke-width="2"/>
<line x1="740.0" y1="371.0" x2="740.0" y2="379.0" stroke="#000080" stroke-width="2"/>
<line x1="740.0" y1="446.0" x2="740.0" y2="454.0" stroke="#000080" stroke-width="2"/>
<line x1="777.0" y1="371.0" x2="777.0" y2="379.0" stroke="#000080" stroke-width="2"/>
<line x1="777.0" y1="446.0" x2="777.0" y2="454.0" stroke="#000080" stroke-width="2"/>
<line x1="784.0" y1="371.0" x2="784.0" y2="379.0" stroke="#000080" stroke-width="2"/>
<line x1="784.0" y1="446.0" x2="784.0" y2="454.0" stroke="#000080" stroke-width="2"/>
<line x1="908.5" y1="370.0" x2="915.5" y2="370.0" stroke="#000080" stroke-width="2"/>
<line x1="908.5" y1="378.0" x2="915.5" y2="378.0" stroke="#000080" stroke-width="2"/>
<line x1="908.5" y1="445.0" x2="915.5" y2="445.0" stroke="#000080" stroke-width="2"/>
<line x1="908.5" y1="454.0" x2="915.5" y2="454.0" stroke="#000080" stroke-width="2"/>
<line x1="739.0" y1="281.0" x2="739.0" y2="289.0" stroke="#000080" stroke-width="2"/>
<text x="638.5" y="412.0" transform="rotate(-90.0 638.5 412.0)" class="na">N/A</text>
<text x="638.5" y="494.0" transform="rotate(-90.0 638.5 494.0)" class="na">N/A</text>
<text x="668.5" y="412.0" transform="rotate(-90.0 668.5 412.0)" class="na">N/A</text>
<text x="668.5" y="494.0" transform="rotate(-90.0 668.5 494.0)" class="na">N/A</text>
<text x="698.5" y="412.0" transform="rotate(-90.0 698.5 412.0)" class="na">N/A</text>
<text x="698.5" y="494.0" transform="rotate(-90.0 698.5 494.0)" class="na">N/A</text>
<text x="728.5" y="412.0" transform="rotate(-90.0 728.5 412.0)" class="na">N/A</text>
<text x="728.5" y="494.0" transform="rotate(-90.0 728.5 494.0)" class="na">N/A</text>
<text x="750.5" y="412.0" transform="rotate(-90.0 750.5 412.0)" class="na">N/A</text>
<text x="750.5" y="494.0" transform="rotate(-90.0 750.5 494.0)" class="na">N/A</text>
<text x="773.5" y="412.0" transform="rotate(-90.0 773.5 412.0)" class="na">N/A</text>
<text x="773.5" y="494.0" transform="rotate(-90.0 773.5 494.0)" class="na">N/A</text>
<text x="799.5" y="412.0" transform="rotate(-90.0 799.5 412.0)" class="na">N/A</text>
<text x="799.5" y="494.0" transform="rotate(-90.0 799.5 494.0)" class="na">N/A</text>
<text x="825.5" y="412.0" transform="rotate(-90.0 825.5 412.0)" class="na">N/A</text>
<text x="825.5" y="494.0" transform="rotate(-90.0 825.5 494.0)" class="na">N/A</text>
<text x="852.5" y="412.0" transform="rotate(-90.0 852.5 412.0)" class="na">N/A</text>
<text x="852.5" y="494.0" transform="rotate(-90.0 852.5 494.0)" class="na">N/A</text>
<text x="878.5" y="412.0" transform="rotate(-90.0 878.5 412.0)" class="na">N/A</text>
<text x="878.5" y="494.0" transform="rotate(-90.0 878.5 494.0)" class="na">N/A</text>
<text x="904.5" y="412.0" transform="rotate(-90.0 904.5 412.0)" class="na">N/A</text>
<text x="904.5" y="494.0" transform="rotate(-90.0 904.5 494.0)" class="na">N/A</text>
<text x="934.5" y="407.0" transform="rotate(-90.0 934.5 407.0)" class="na">N/A</text>
<text x="964.5" y="402.0" transform="rotate(-90.0 964.5 402.0)" class="na">N/A</text>
<text x="994.5" y="397.0" transform="rotate(-90.0 994.5 397.0)" class="na">N/A</text>
<text x="934.5" y="494.0" transform="rotate(-90.0 934.5 494.0)" class="na">N/A</text>
<text x="964.5" y="494.0" transform="rotate(-90.0 964.5 494.0)" class="na">N/A</text>
<text x="994.5" y="494.0" transform="rotate(-90.0 994.5 494.0)" class="na">N/A</text>
<text x="773.5" y="315.0" transform="rotate(-90.0 773.5 315.0)" class="na">N/A</text>
<text x="799.5" y="315.0" transform="rotate(-90.0 799.5 315.0)" class="na">N/A</text>
<text x="825.5" y="315.0" transform="rotate(-90.0 825.5 315.0)" class="na">N/A</text>
<text x="852.5" y="315.0" transform="rotate(-90.0 852.5 315.0)" class="na">N/A</text>
<text x="878.5" y="315.0" transform="rotate(-90.0 878.5 315.0)" class="na">N/A</text>
<text x="904.5" y="315.0" transform="rotate(-90.0 904.5 315.0)" class="na">N/A</text>
<text x="934.5" y="310.0" transform="rotate(-90.0 934.5 310.0)" class="na">N/A</text>
<text x="964.5" y="305.0" transform="rotate(-90.0 964.5 305.0)" class="na">N/A</text>
<text x="994.5" y="300.0" transform="rotate(-90.0 994.5 300.0)" class="na">N/A</text>
<text x="728.5" y="330.0" transform="rotate(-90.0 728.5 330.0)" class="na">N/A</text>
<text x="750.5" y="330.0" transform="rotate(-90.0 750.5 330.0)" class="na">N/A</text>
<text x="757.6" y="277.5" class="na">N/A</text>
<text x="690.4" y="367.5" class="na">N/A</text>
<text x="757.6" y="367.5" class="na">N/A</text>
<text x="846.6" y="367.5" class="na">N/A</text>
<text x="690.4" y="442.5" class="na">N/A</text>
<text x="757.6" y="442.5" class="na">N/A</text>
<text x="846.6" y="442.5" class="na">N/A</text>
<text x="956.6" y="442.5" class="na">N/A</text>
<text x="690.4" y="531.5" class="na">N/A</text>
<text x="757.6" y="531.5" class="na">N/A</text>
<text x="956.0" y="531.5" class="na">N/A</text>
<text x="953.6" y="351.0" transform="rotate(-18.0 953.6 351.0)" class="na">N/A</text>
<polygon points="1005.0,536.0 1005.0,453.0 1046.2,465.6 1077.9,496.8 1089.0,536.0" fill="none" stroke="#008080" stroke-width="2" stroke-linejoin="miter"/>
<line x1="1005.9" y1="451.0" x2="1042.7" y2="460.9" stroke="#000080" stroke-width="2"/>
<text x="1026.3" y="448.2" transform="rotate(15.0 1026.3 448.2)" class="na">N/A</text>
<line x1="1005.9" y1="423.0" x2="1056.6" y2="436.7" stroke="#000080" stroke-width="2"/>
<text x="1033.3" y="422.1" transform="rotate(15.0 1033.3 422.1)" class="na">N/A</text>
<line x1="1005.9" y1="395.1" x2="1070.6" y2="412.4" stroke="#000080" stroke-width="2"/>
<text x="1040.3" y="396.0" transform="rotate(15.0 1040.3 396.0)" class="na">N/A</text>
<line x1="1005.9" y1="367.1" x2="1084.6" y2="388.2" stroke="#000080" stroke-width="2"/>
<text x="1047.3" y="370.0" transform="rotate(15.0 1047.3 370.0)" class="na">N/A</text>
<line x1="1049.3" y1="464.7" x2="1076.3" y2="491.7" stroke="#000080" stroke-width="2"/>
<text x="1068.5" y="472.5" transform="rotate(45.0 1068.5 472.5)" class="na">N/A</text>
<line x1="1063.3" y1="440.5" x2="1100.5" y2="477.7" stroke="#000080" stroke-width="2"/>
<text x="1087.6" y="453.4" transform="rotate(45.0 1087.6 453.4)" class="na">N/A</text>
<line x1="1077.3" y1="416.3" x2="1124.7" y2="463.7" stroke="#000080" stroke-width="2"/>
<text x="1106.7" y="434.3" transform="rotate(45.0 1106.7 434.3)" class="na">N/A</text>
<line x1="1091.3" y1="392.1" x2="1148.9" y2="449.7" stroke="#000080" stroke-width="2"/>
<text x="1125.7" y="415.3" transform="rotate(45.0 1125.7 415.3)" class="na">N/A</text>
<line x1="1080.1" y1="498.3" x2="1090.0" y2="535.1" stroke="#000080" stroke-width="2"/>
<text x="1092.8" y="514.7" transform="rotate(75.0 1092.8 514.7)" class="na">N/A</text>
<line x1="1104.3" y1="484.4" x2="1118.0" y2="535.1" stroke="#000080" stroke-width="2"/>
<text x="1118.9" y="507.7" transform="rotate(75.0 1118.9 507.7)" class="na">N/A</text>
<line x1="1128.6" y1="470.4" x2="1145.9" y2="535.1" stroke="#000080" stroke-width="2"/>
<text x="1145.0" y="500.7" transform="rotate(75.0 1145.0 500.7)" class="na">N/A</text>
<line x1="1152.8" y1="456.4" x2="1173.9" y2="535.1" stroke="#000080" stroke-width="2"/>
<text x="1171.0" y="493.7" transform="rotate(75.0 1171.0 493.7)" class="na">N/A</text>
<line x1="1196.6" y1="536.0" x2="1190.7" y2="491.5" stroke="#000080" stroke-width="2"/>
<text x="1202.6" y="512.6" transform="rotate(82.5 1202.6 512.6)" class="na">N/A</text>
<line x1="1189.2" y1="485.8" x2="1172.0" y2="444.3" stroke="#000080" stroke-width="2"/>
<text x="1188.9" y="461.6" transform="rotate(67.5 1188.9 461.6)" class="na">N/A</text>
<line x1="1186.0" y1="487.1" x2="1192.4" y2="484.4" stroke="#000080" stroke-width="2"/>
<line x1="1169.0" y1="439.1" x2="1141.7" y2="403.5" stroke="#000080" stroke-width="2"/>
<text x="1162.5" y="415.8" transform="rotate(52.5 1162.5 415.8)" class="na">N/A</text>
<line x1="1137.5" y1="399.3" x2="1101.9" y2="372.0" stroke="#000080" stroke-width="2"/>
<text x="1125.2" y="378.5" transform="rotate(37.5 1125.2 378.5)" class="na">N/A</text>
<line x1="1135.4" y1="402.1" x2="1139.6" y2="396.5" stroke="#000080" stroke-width="2"/>
<line x1="1096.7" y1="369.0" x2="1055.2" y2="351.8" stroke="#000080" stroke-width="2"/>
<text x="1079.4" y="352.1" transform="rotate(22.5 1079.4 352.1)" class="na">N/A</text>
<line x1="1049.5" y1="350.3" x2="1005.0" y2="344.4" stroke="#000080" stroke-width="2"/>
<text x="1028.4" y="338.4" transform="rotate(7.5 1028.4 338.4)" class="na">N/A</text>
<line x1="1049.0" y1="353.7" x2="1050.0" y2="346.8" stroke="#000080" stroke-width="2"/>
<line x1="1047.0" y1="461.1" x2="1099.0" y2="371.0" stroke="#000080" stroke-width="2"/>
<text x="1066.1" y="412.0" transform="rotate(-60.0 1066.1 412.0)" class="na">N/A</text>
<line x1="1079.9" y1="494.0" x2="1170.0" y2="442.0" stroke="#000080" stroke-width="2"/>
<text x="1121.0" y="461.1" transform="rotate(-30.0 1121.0 461.1)" class="na">N/A</text>
<line x1="1006.0" y1="461.6" x2="1079.4" y2="534.0" stroke="#000080" stroke-width="2"/>
<text x="1048.3" y="492.1" transform="rotate(44.6 1048.3 492.1)" class="na">N/A</text>
<line x1="1006.0" y1="502.0" x2="1036.8" y2="534.0" stroke="#000080" stroke-width="2"/>
<text x="1027.2" y="512.5" transform="rotate(46.1 1027.2 512.5)" class="na">N/A</text>
<text x="1046.0" y="531.5" class="na">N/A</text>
<line x1="1004.0" y1="539.0" x2="1089.0" y2="539.0" stroke="#000080" stroke-width="2"/>
<polygon points="915.6,542.0 926.7,582.2 960.0,614.4 999.0,624.4 999.0,542.0" fill="none" stroke="#008080" stroke-width="2" stroke-linejoin="miter"/>
<line x1="923.9" y1="579.7" x2="914.0" y2="542.9" stroke="#000080" stroke-width="2"/>
<text x="926.7" y="559.2" transform="rotate(75.0 926.7 559.2)" class="na">N/A</text>
<line x1="899.7" y1="593.6" x2="886.0" y2="542.9" stroke="#000080" stroke-width="2"/>
<text x="900.6" y="566.2" transform="rotate(75.0 900.6 566.2)" class="na">N/A</text>
<line x1="875.4" y1="607.6" x2="858.1" y2="542.9" stroke="#000080" stroke-width="2"/>
<text x="874.5" y="573.2" transform="rotate(75.0 874.5 573.2)" class="na">N/A</text>
<line x1="851.2" y1="621.6" x2="830.1" y2="542.9" stroke="#000080" stroke-width="2"/>
<text x="848.4" y="580.2" transform="rotate(75.0 848.4 580.2)" class="na">N/A</text>
<line x1="954.7" y1="613.3" x2="927.7" y2="586.3" stroke="#000080" stroke-width="2"/>
<text x="946.8" y="594.2" transform="rotate(45.0 946.8 594.2)" class="na">N/A</text>
<line x1="940.7" y1="637.5" x2="903.5" y2="600.3" stroke="#000080" stroke-width="2"/>
<text x="927.8" y="613.2" transform="rotate(45.0 927.8 613.2)" class="na">N/A</text>
<line x1="926.7" y1="661.7" x2="879.3" y2="614.3" stroke="#000080" stroke-width="2"/>
<text x="908.7" y="632.3" transform="rotate(45.0 908.7 632.3)" class="na">N/A</text>
<line x1="912.7" y1="685.9" x2="855.1" y2="628.3" stroke="#000080" stroke-width="2"/>
<text x="889.6" y="651.4" transform="rotate(45.0 889.6 651.4)" class="na">N/A</text>
<line x1="998.1" y1="627.0" x2="961.3" y2="617.1" stroke="#000080" stroke-width="2"/>
<text x="981.8" y="614.3" transform="rotate(15.0 981.8 614.3)" class="na">N/A</text>
<line x1="998.1" y1="655.0" x2="947.4" y2="641.3" stroke="#000080" stroke-width="2"/>
<text x="974.8" y="640.4" transform="rotate(15.0 974.8 640.4)" class="na">N/A</text>
<line x1="998.1" y1="682.9" x2="933.4" y2="665.6" stroke="#000080" stroke-width="2"/>
<text x="967.8" y="666.5" transform="rotate(15.0 967.8 666.5)" class="na">N/A</text>
<line x1="998.1" y1="710.9" x2="919.4" y2="689.8" stroke="#000080" stroke-width="2"/>
<text x="960.8" y="692.6" transform="rotate(15.0 960.8 692.6)" class="na">N/A</text>
<line x1="924.1" y1="584.0" x2="834.0" y2="636.0" stroke="#000080" stroke-width="2"/>
<text x="875.0" y="603.1" transform="rotate(-30.0 875.0 603.1)" class="na">N/A</text>
<line x1="957.0" y1="616.9" x2="905.0" y2="707.0" stroke="#000080" stroke-width="2"/>
<text x="924.1" y="658.0" transform="rotate(-60.0 924.1 658.0)" class="na">N/A</text>
<line x1="912.0" y1="539.0" x2="1002.0" y2="539.0" stroke="#000080" stroke-width="2"/>
<line x1="1002.0" y1="541.0" x2="1002.0" y2="628.0" stroke="#000080" stroke-width="2"/>
<text x="994.4" y="583.3" transform="rotate(-90.0 994.4 583.3)" class="na">N/A</text>
<line x1="781.3" y1="541.0" x2="788.3" y2="594.2" stroke="#000080" stroke-width="2"/>
<line x1="808.4" y1="542.0" x2="814.2" y2="586.2" stroke="#000080" stroke-width="2"/>
<text x="820.2" y="562.9" transform="rotate(82.5 820.2 562.9)" class="na">N/A</text>
<line x1="805.6" y1="554.5" x2="783.7" y2="556.2" stroke="#000080" stroke-width="2"/>
<line x1="807.7" y1="571.3" x2="786.0" y2="575.0" stroke="#000080" stroke-width="2"/>
<line x1="811.1" y1="587.5" x2="789.7" y2="592.9" stroke="#000080" stroke-width="2"/>
<text x="794.7" y="547.1" transform="rotate(-2.2 794.7 547.1)" class="na">N/A</text>
<text x="796.0" y="563.9" transform="rotate(-6.9 796.0 563.9)" class="na">N/A</text>
<text x="796.0" y="563.9" transform="rotate(83.1 796.0 563.9)" class="na">N/A</text>
<text x="798.9" y="581.6" transform="rotate(-11.8 798.9 581.6)" class="na">N/A</text>
<line x1="789.3" y1="598.0" x2="809.8" y2="647.7" stroke="#000080" stroke-width="2"/>
<line x1="815.8" y1="592.0" x2="832.8" y2="633.2" stroke="#000080" stroke-width="2"/>
<text x="832.6" y="609.2" transform="rotate(67.5 832.6 609.2)" class="na">N/A</text>
<line x1="816.3" y1="604.8" x2="795.6" y2="612.1" stroke="#000080" stroke-width="2"/>
<line x1="822.7" y1="620.5" x2="802.6" y2="629.6" stroke="#000080" stroke-width="2"/>
<line x1="830.1" y1="635.3" x2="810.9" y2="646.0" stroke="#000080" stroke-width="2"/>
<text x="803.8" y="600.5" transform="rotate(-17.2 803.8 600.5)" class="na">N/A</text>
<text x="809.5" y="616.4" transform="rotate(-21.9 809.5 616.4)" class="na">N/A</text>
<text x="809.5" y="616.4" transform="rotate(68.1 809.5 616.4)" class="na">N/A</text>
<text x="816.9" y="632.7" transform="rotate(-26.9 816.9 632.7)" class="na">N/A</text>
<line x1="811.8" y1="651.1" x2="844.5" y2="693.7" stroke="#000080" stroke-width="2"/>
<line x1="835.8" y1="638.4" x2="863.0" y2="673.8" stroke="#000080" stroke-width="2"/>
<text x="856.5" y="650.6" transform="rotate(52.5 856.5 650.6)" class="na">N/A</text>
<line x1="839.6" y1="650.6" x2="821.5" y2="663.0" stroke="#000080" stroke-width="2"/>
<line x1="849.9" y1="664.2" x2="832.9" y2="678.2" stroke="#000080" stroke-width="2"/>
<line x1="860.9" y1="676.5" x2="845.1" y2="691.8" stroke="#000080" stroke-width="2"/>
<text x="826.5" y="649.7" transform="rotate(-32.2 826.5 649.7)" class="na">N/A</text>
<text x="836.1" y="663.6" transform="rotate(-36.9 836.1 663.6)" class="na">N/A</text>
<text x="836.1" y="663.6" transform="rotate(53.1 836.1 663.6)" class="na">N/A</text>
<text x="847.4" y="677.4" transform="rotate(-41.8 847.4 677.4)" class="na">N/A</text>
<line x1="847.3" y1="696.5" x2="889.9" y2="729.2" stroke="#000080" stroke-width="2"/>
<line x1="867.2" y1="678.0" x2="902.6" y2="705.2" stroke="#000080" stroke-width="2"/>
<text x="890.4" y="684.5" transform="rotate(37.5 890.4 684.5)" class="na">N/A</text>
<line x1="864.5" y1="680.1" x2="849.2" y2="695.9" stroke="#000080" stroke-width="2"/>
<line x1="876.8" y1="691.1" x2="862.8" y2="708.1" stroke="#000080" stroke-width="2"/>
<line x1="890.4" y1="701.4" x2="878.0" y2="719.5" stroke="#000080" stroke-width="2"/>
<text x="863.6" y="693.6" transform="rotate(-48.1 863.6 693.6)" class="na">N/A</text>
<text x="877.4" y="704.9" transform="rotate(-53.1 877.4 704.9)" class="na">N/A</text>
<text x="877.4" y="704.9" transform="rotate(36.9 877.4 704.9)" class="na">N/A</text>
<text x="891.3" y="714.5" transform="rotate(-57.8 891.3 714.5)" class="na">N/A</text>
<line x1="893.3" y1="731.2" x2="943.0" y2="751.7" stroke="#000080" stroke-width="2"/>
<line x1="907.8" y1="708.2" x2="949.0" y2="725.2" stroke="#000080" stroke-width="2"/>
<text x="931.8" y="708.4" transform="rotate(22.5 931.8 708.4)" class="na">N/A</text>
<line x1="905.7" y1="710.9" x2="895.0" y2="730.1" stroke="#000080" stroke-width="2"/>
<line x1="920.5" y1="718.3" x2="911.4" y2="738.4" stroke="#000080" stroke-width="2"/>
<line x1="936.2" y1="724.7" x2="928.9" y2="745.4" stroke="#000080" stroke-width="2"/>
<text x="908.3" y="724.1" transform="rotate(-63.1 908.3 724.1)" class="na">N/A</text>
<text x="924.6" y="731.5" transform="rotate(-68.1 924.6 731.5)" class="na">N/A</text>
<text x="924.6" y="731.5" transform="rotate(21.9 924.6 731.5)" class="na">N/A</text>
<text x="940.5" y="737.2" transform="rotate(-72.7 940.5 737.2)" class="na">N/A</text>
<line x1="946.8" y1="752.7" x2="1000.0" y2="759.7" stroke="#000080" stroke-width="2"/>
<line x1="954.8" y1="726.8" x2="999.0" y2="732.6" stroke="#000080" stroke-width="2"/>
<text x="978.1" y="720.8" transform="rotate(7.5 978.1 720.8)" class="na">N/A</text>
<line x1="953.5" y1="729.9" x2="948.1" y2="751.3" stroke="#000080" stroke-width="2"/>
<line x1="969.7" y1="733.3" x2="966.0" y2="755.0" stroke="#000080" stroke-width="2"/>
<line x1="986.5" y1="735.4" x2="984.8" y2="757.3" stroke="#000080" stroke-width="2"/>
<text x="959.4" y="742.1" transform="rotate(-78.1 959.4 742.1)" class="na">N/A</text>
<text x="977.1" y="745.0" transform="rotate(-83.1 977.1 745.0)" class="na">N/A</text>
<text x="977.1" y="745.0" transform="rotate(6.9 977.1 745.0)" class="na">N/A</text>
<text x="993.9" y="746.3" transform="rotate(-87.7 993.9 746.3)" class="na">N/A</text>
<line x1="1091.0" y1="541.0" x2="1091.0" y2="894.0" stroke="#000080" stroke-width="2"/>
<line x1="1166.0" y1="626.0" x2="1166.0" y2="894.0" stroke="#000080" stroke-width="2"/>
<line x1="1166.0" y1="626.0" x2="1196.0" y2="540.0" stroke="#000080" stroke-width="2"/>
<line x1="1256.0" y1="762.0" x2="1256.0" y2="805.0" stroke="#000080" stroke-width="2"/>
<line x1="1002.0" y1="761.0" x2="1002.0" y2="805.0" stroke="#000080" stroke-width="2"/>
<line x1="1200.0" y1="539.0" x2="1285.0" y2="539.0" stroke="#000080" stroke-width="2"/>
<line x1="1006.0" y1="569.0" x2="1087.5" y2="569.0" stroke="#000080" stroke-width="2"/>
<text x="1046.8" y="562.0" class="na">N/A</text>
<line x1="1096.0" y1="569.0" x2="1181.0" y2="569.0" stroke="#000080" stroke-width="2"/>
<text x="1138.5" y="562.0" class="na">N/A</text>
<line x1="1191.0" y1="569.0" x2="1281.0" y2="569.0" stroke="#000080" stroke-width="2"/>
<text x="1236.0" y="562.0" class="na">N/A</text>
<line x1="1006.0" y1="599.0" x2="1087.5" y2="599.0" stroke="#000080" stroke-width="2"/>
<text x="1046.8" y="592.0" class="na">N/A</text>
<line x1="1096.0" y1="599.0" x2="1171.0" y2="599.0" stroke="#000080" stroke-width="2"/>
<text x="1133.5" y="592.0" class="na">N/A</text>
<line x1="1180.0" y1="599.0" x2="1281.0" y2="599.0" stroke="#000080" stroke-width="2"/>
<text x="1230.5" y="592.0" class="na">N/A</text>
<line x1="1006.0" y1="629.0" x2="1087.5" y2="629.0" stroke="#000080" stroke-width="2"/>
<text x="1046.8" y="622.0" class="na">N/A</text>
<line x1="1096.0" y1="629.0" x2="1162.0" y2="629.0" stroke="#000080" stroke-width="2"/>
<text x="1129.0" y="622.0" class="na">N/A</text>
<line x1="1171.0" y1="629.0" x2="1281.0" y2="629.0" stroke="#000080" stroke-width="2"/>
<text x="1226.0" y="622.0" class="na">N/A</text>
<line x1="1006.0" y1="655.0" x2="1087.5" y2="655.0" stroke="#000080" stroke-width="2"/>
<text x="1046.8" y="648.0" class="na">N/A</text>
<line x1="1096.0" y1="655.0" x2="1162.0" y2="655.0" stroke="#000080" stroke-width="2"/>
<text x="1129.0" y="648.0" class="na">N/A</text>
<line x1="1171.0" y1="655.0" x2="1281.0" y2="655.0" stroke="#000080" stroke-width="2"/>
<text x="1226.0" y="648.0" class="na">N/A</text>
<line x1="1006.0" y1="681.0" x2="1087.5" y2="681.0" stroke="#000080" stroke-width="2"/>
<text x="1046.8" y="674.0" class="na">N/A</text>
<line x1="1096.0" y1="681.0" x2="1162.0" y2="681.0" stroke="#000080" stroke-width="2"/>
<text x="1129.0" y="674.0" class="na">N/A</text>
<line x1="1171.0" y1="681.0" x2="1281.0" y2="681.0" stroke="#000080" stroke-width="2"/>
<text x="1226.0" y="674.0" class="na">N/A</text>
<line x1="1006.0" y1="708.0" x2="1087.5" y2="708.0" stroke="#000080" stroke-width="2"/>
<text x="1046.8" y="701.0" class="na">N/A</text>
<line x1="1096.0" y1="708.0" x2="1162.0" y2="708.0" stroke="#000080" stroke-width="2"/>
<text x="1129.0" y="701.0" class="na">N/A</text>
<line x1="1171.0" y1="708.0" x2="1281.0" y2="708.0" stroke="#000080" stroke-width="2"/>
<text x="1226.0" y="701.0" class="na">N/A</text>
<line x1="1006.0" y1="734.0" x2="1087.5" y2="734.0" stroke="#000080" stroke-width="2"/>
<text x="1046.8" y="727.0" class="na">N/A</text>
<line x1="1096.0" y1="734.0" x2="1162.0" y2="734.0" stroke="#000080" stroke-width="2"/>
<text x="1129.0" y="727.0" class="na">N/A</text>
<line x1="1171.0" y1="734.0" x2="1281.0" y2="734.0" stroke="#000080" stroke-width="2"/>
<text x="1226.0" y="727.0" class="na">N/A</text>
<line x1="1006.0" y1="760.0" x2="1087.5" y2="760.0" stroke="#000080" stroke-width="2"/>
<text x="1046.8" y="753.0" class="na">N/A</text>
<line x1="1096.0" y1="760.0" x2="1162.0" y2="760.0" stroke="#000080" stroke-width="2"/>
<text x="1129.0" y="753.0" class="na">N/A</text>
<line x1="1171.0" y1="760.0" x2="1281.0" y2="760.0" stroke="#000080" stroke-width="2"/>
<text x="1226.0" y="753.0" class="na">N/A</text>
<line x1="1006.0" y1="783.0" x2="1087.5" y2="783.0" stroke="#000080" stroke-width="2"/>
<text x="1046.8" y="776.0" class="na">N/A</text>
<line x1="1096.0" y1="783.0" x2="1162.0" y2="783.0" stroke="#000080" stroke-width="2"/>
<text x="1129.0" y="776.0" class="na">N/A</text>
<line x1="1171.0" y1="783.0" x2="1253.0" y2="783.0" stroke="#000080" stroke-width="2"/>
<text x="1212.0" y="776.0" class="na">N/A</text>
<line x1="1006.0" y1="805.0" x2="1087.5" y2="805.0" stroke="#000080" stroke-width="2"/>
<text x="1046.8" y="798.0" class="na">N/A</text>
<line x1="1096.0" y1="805.0" x2="1162.0" y2="805.0" stroke="#000080" stroke-width="2"/>
<text x="1129.0" y="798.0" class="na">N/A</text>
<line x1="1171.0" y1="805.0" x2="1253.0" y2="805.0" stroke="#000080" stroke-width="2"/>
<text x="1212.0" y="798.0" class="na">N/A</text>
<line x1="1006.0" y1="835.0" x2="1087.5" y2="835.0" stroke="#000080" stroke-width="2"/>
<text x="1046.8" y="828.0" class="na">N/A</text>
<line x1="1096.0" y1="835.0" x2="1162.0" y2="835.0" stroke="#000080" stroke-width="2"/>
<text x="1129.0" y="828.0" class="na">N/A</text>
<line x1="1006.0" y1="865.0" x2="1087.5" y2="865.0" stroke="#000080" stroke-width="2"/>
<text x="1046.8" y="858.0" class="na">N/A</text>
<line x1="1096.0" y1="865.0" x2="1162.0" y2="865.0" stroke="#000080" stroke-width="2"/>
<text x="1129.0" y="858.0" class="na">N/A</text>
<line x1="1006.0" y1="894.0" x2="1087.5" y2="894.0" stroke="#000080" stroke-width="2"/>
<text x="1046.8" y="887.0" class="na">N/A</text>
<line x1="1096.0" y1="894.0" x2="1162.0" y2="894.0" stroke="#000080" stroke-width="2"/>
<text x="1129.0" y="887.0" class="na">N/A</text>
<line x1="1087.5" y1="625.0" x2="1094.5" y2="625.0" stroke="#000080" stroke-width="2"/>
<line x1="1087.5" y1="633.0" x2="1094.5" y2="633.0" stroke="#000080" stroke-width="2"/>
<line x1="1162.5" y1="625.0" x2="1169.5" y2="625.0" stroke="#000080" stroke-width="2"/>
<line x1="1162.5" y1="633.0" x2="1169.5" y2="633.0" stroke="#000080" stroke-width="2"/>
<line x1="1087.5" y1="756.0" x2="1094.5" y2="756.0" stroke="#000080" stroke-width="2"/>
<line x1="1087.5" y1="764.0" x2="1094.5" y2="764.0" stroke="#000080" stroke-width="2"/>
<line x1="1162.5" y1="756.0" x2="1169.5" y2="756.0" stroke="#000080" stroke-width="2"/>
<line x1="1162.5" y1="764.0" x2="1169.5" y2="764.0" stroke="#000080" stroke-width="2"/>
<line x1="1087.5" y1="801.0" x2="1094.5" y2="801.0" stroke="#000080" stroke-width="2"/>
<line x1="1087.5" y1="809.0" x2="1094.5" y2="809.0" stroke="#000080" stroke-width="2"/>
<line x1="1162.5" y1="801.0" x2="1169.5" y2="801.0" stroke="#000080" stroke-width="2"/>
<line x1="1162.5" y1="809.0" x2="1169.5" y2="809.0" stroke="#000080" stroke-width="2"/>
<line x1="1087.5" y1="890.0" x2="1094.5" y2="890.0" stroke="#000080" stroke-width="2"/>
<line x1="1087.5" y1="898.0" x2="1094.5" y2="898.0" stroke="#000080" stroke-width="2"/>
<line x1="1162.5" y1="890.0" x2="1169.5" y2="890.0" stroke="#000080" stroke-width="2"/>
<line x1="1162.5" y1="898.0" x2="1169.5" y2="898.0" stroke="#000080" stroke-width="2"/>
<text x="1240.6" y="531.5" class="na">N/A</text>
<text x="1083.9" y="584.0" transform="rotate(-90.0 1083.9 584.0)" class="na">N/A</text>
<text x="1083.9" y="693.0" transform="rotate(-90.0 1083.9 693.0)" class="na">N/A</text>
<text x="1158.5" y="693.0" transform="rotate(-90.0 1158.5 693.0)" class="na">N/A</text>
<text x="994.2" y="783.0" transform="rotate(-90.0 994.2 783.0)" class="na">N/A</text>
<text x="1083.3" y="783.0" transform="rotate(-90.0 1083.3 783.0)" class="na">N/A</text>
<text x="1158.3" y="783.0" transform="rotate(-90.0 1158.3 783.0)" class="na">N/A</text>
<text x="1248.3" y="783.0" transform="rotate(-90.0 1248.3 783.0)" class="na">N/A</text>
<text x="994.2" y="850.0" transform="rotate(-90.0 994.2 850.0)" class="na">N/A</text>
<text x="1083.3" y="850.0" transform="rotate(-90.0 1083.3 850.0)" class="na">N/A</text>
<text x="1158.3" y="850.0" transform="rotate(-90.0 1158.3 850.0)" class="na">N/A</text>
<text x="1170.5" y="581.4" transform="rotate(-70.0 1170.5 581.4)" class="na">N/A</text>
<rect x="68" y="201" width="19" height="18" fill="#0000ff"/>
<line x1="67.5" y1="186" x2="67.5" y2="218" stroke="#000" stroke-width="1"/>
<line x1="67" y1="218.5" x2="98" y2="218.5" stroke="#000" stroke-width="1"/>
<circle cx="67.5" cy="186" r="1.8" fill="#0a5a0a"/><circle cx="67.5" cy="218" r="1.8" fill="#0a5a0a"/><circle cx="98" cy="218.5" r="1.8" fill="#0a5a0a"/>
<circle cx="87.5" cy="201.5" r="2.2" fill="#ffee00" stroke="#555" stroke-width=".6"/>
<text x="72" y="190" style="font:bold 12px Liberation Sans,sans-serif" fill="#000">X</text>
<text x="101" y="222" style="font:bold 12px Liberation Sans,sans-serif" fill="#000">Z</text>
<text x="71" y="221" style="font:bold 11px Liberation Sans,sans-serif" fill="#000">Y</text>
<g font-family='"Liberation Sans", sans-serif'><text x="23" y="16" font-size="12" fill="#000" text-anchor="start" textLength="511" lengthAdjust="spacingAndGlyphs" >RISAFloor - [C:\RISA User Data\Candice Cobb\Model Files\Examples\RISAFloor Sample Model.rfl]</text>
<text x="8" y="36.7" font-size="12" fill="#000" text-anchor="start" textLength="17" lengthAdjust="spacingAndGlyphs" >File</text>
<text x="39" y="36.7" font-size="12" fill="#000" text-anchor="start" textLength="20" lengthAdjust="spacingAndGlyphs" >Edit</text>
<text x="73" y="36.7" font-size="12" fill="#000" text-anchor="start" textLength="42" lengthAdjust="spacingAndGlyphs" >Settings</text>
<text x="128.75" y="36.7" font-size="12" fill="#000" text-anchor="start" textLength="25.0" lengthAdjust="spacingAndGlyphs" >View</text>
<text x="168.1" y="36.7" font-size="12" fill="#000" text-anchor="start" textLength="28.4" lengthAdjust="spacingAndGlyphs" >Insert</text>
<text x="211.25" y="36.7" font-size="12" fill="#000" text-anchor="start" textLength="37.5" lengthAdjust="spacingAndGlyphs" >Modify</text>
<text x="263.1" y="36.7" font-size="12" fill="#000" text-anchor="start" textLength="68.8" lengthAdjust="spacingAndGlyphs" >Spreadsheets</text>
<text x="346" y="36.7" font-size="12" fill="#000" text-anchor="start" textLength="28" lengthAdjust="spacingAndGlyphs" >Solve</text>
<text x="388.75" y="36.7" font-size="12" fill="#8c8c8c" text-anchor="start" textLength="36.25" lengthAdjust="spacingAndGlyphs" >Results</text>
<text x="439.4" y="36.7" font-size="12" fill="#000" text-anchor="start" textLength="26.6" lengthAdjust="spacingAndGlyphs" >Tools</text>
<text x="480" y="36.7" font-size="12" fill="#000" text-anchor="start" textLength="43.75" lengthAdjust="spacingAndGlyphs" >Window</text>
<text x="538.1" y="36.7" font-size="12" fill="#000" text-anchor="start" textLength="24.4" lengthAdjust="spacingAndGlyphs" >Help</text>
<text x="1807.4" y="36.5" font-size="12" fill="#000" text-anchor="start" textLength="49.6" lengthAdjust="spacingAndGlyphs" >Feedback</text>
<text x="1871.5" y="36.5" font-size="12" fill="#000" text-anchor="start" textLength="41.2" lengthAdjust="spacingAndGlyphs" >Director</text>
<text x="29" y="89.8" font-size="12" fill="#000" text-anchor="start" textLength="77" lengthAdjust="spacingAndGlyphs" >1: Floor Plan 1</text>
<text x="479.2" y="89.7" font-size="12" fill="#000" text-anchor="start" textLength="93.3" lengthAdjust="spacingAndGlyphs" >DL PreComp - Pr</text>
<text x="60.4" y="124.6" font-size="12" fill="#000" text-anchor="start" textLength="60" lengthAdjust="spacingAndGlyphs" >Floor Plan 1</text>
<text x="1778.9" y="112" font-size="12" fill="#8c8c8c" text-anchor="start" textLength="53" lengthAdjust="spacingAndGlyphs" >Data Entry</text>
<text x="54" y="978.5" font-size="12" fill="#1c1c8c" text-anchor="start" textLength="137.2" lengthAdjust="spacingAndGlyphs" >Loads: Envelope Results</text>
<text x="129.4" y="1074" font-size="12" fill="#000" text-anchor="start" textLength="121.4" lengthAdjust="spacingAndGlyphs" >Draw or Modify Beams</text>
<text x="1132" y="1074.5" font-size="12" fill="#000" text-anchor="start" textLength="207.2" lengthAdjust="spacingAndGlyphs" >Deck &amp; Uniform Area Load Display Off</text>
<text x="1607.5" y="1074.5" font-size="12" fill="#000" text-anchor="start" textLength="226.4" lengthAdjust="spacingAndGlyphs" xml:space="preserve">33.75, 119, 0 (ft) (1/4 Pt)   (Ctrl-X to toggle)</text>
<text x="17.2" y="780" font-size="12.5" fill="#000" text-anchor="start" textLength="48" lengthAdjust="spacingAndGlyphs" transform="rotate(-90 17.2 780)">Elevation</text>
<path d="M6,14.5 V6.5 H9.5 M6,10 H9 M10.5,6.5 V14 H14" stroke="#fff" stroke-width="1.3" fill="none"/>
<path d="M44.5,123.5 V116.5 H48 M44.5,119.5 H47.5 M48.5,116.5 V123 H52" stroke="#fff" stroke-width="1.2" fill="none"/>
<text x="1842" y="137" font-size="12.4" fill="#000" text-anchor="middle" >Project Grid</text>
<text x="1842" y="153" font-size="12.4" fill="#000" text-anchor="middle" >Materials</text>
<text x="1842" y="169" font-size="12.4" fill="#000" text-anchor="middle" >Deck Definitions</text>
<text x="1842" y="185" font-size="12.4" fill="#000" text-anchor="middle" >Member Design Rules</text>
<text x="1842" y="201" font-size="12.4" fill="#000" text-anchor="middle" >Wall Design Rules</text>
<text x="1842" y="217" font-size="12.4" fill="#000" text-anchor="middle" >Connection Rules</text>
<text x="1842" y="233" font-size="12.4" fill="#000" text-anchor="middle" >Area Load Definitions</text>
<text x="1842" y="249" font-size="12.4" fill="#000" text-anchor="middle" >Point Locations</text>
<text x="1842" y="265" font-size="12.4" fill="#000" text-anchor="middle" >Columns</text>
<text x="1842" y="281" font-size="12.4" fill="#000" text-anchor="middle" >Column Stacks</text>
<text x="1842" y="297" font-size="12.4" fill="#000" text-anchor="middle" >Wall Panels</text>
<text x="1842" y="313" font-size="12.4" fill="#000" text-anchor="middle" >Beams</text>
<text x="1842" y="329" font-size="12.4" fill="#000" text-anchor="middle" >Diaphragms</text>
<text x="1842" y="345" font-size="12.4" fill="#000" text-anchor="middle" >Point Loads</text>
<text x="1842" y="361" font-size="12.4" fill="#000" text-anchor="middle" >Line Loads</text>
<text x="1842" y="377" font-size="12.4" fill="#000" text-anchor="middle" >Tapered Area Loads</text>
<text x="1842" y="393" font-size="12.4" fill="#000" text-anchor="middle" >Load Combinations</text>
<text x="1842" y="409" font-size="12.4" fill="#000" text-anchor="middle" >Floors</text>
<text x="41.5" y="1076" font-size="20" fill="#ffffff" text-anchor="start" font-family="Liberation Serif" font-weight="bold">S</text>
<text x="40.5" y="1075" font-size="20" fill="#8c8c8c" text-anchor="start" font-family="Liberation Serif" font-weight="bold">S</text>
<path d="M52,992 l-4,4 l4,4 M1877,992 l4,4 l-4,4" stroke="#555" stroke-width="2" fill="none"/></g>
<path d="M1894,976 l4,4 l4,-4" stroke="#606060" stroke-width="1.8" fill="none"/><g fill="#a0a0a0"><rect x="1901" y="995" width="2" height="2"/><rect x="1901" y="999" width="2" height="2"/><rect x="1897" y="999" width="2" height="2"/><rect x="1893" y="999" width="2" height="2"/><rect x="1897" y="995" width="2" height="2"/><rect x="1901" y="991" width="2" height="2"/></g>
</svg>
</body></html>
